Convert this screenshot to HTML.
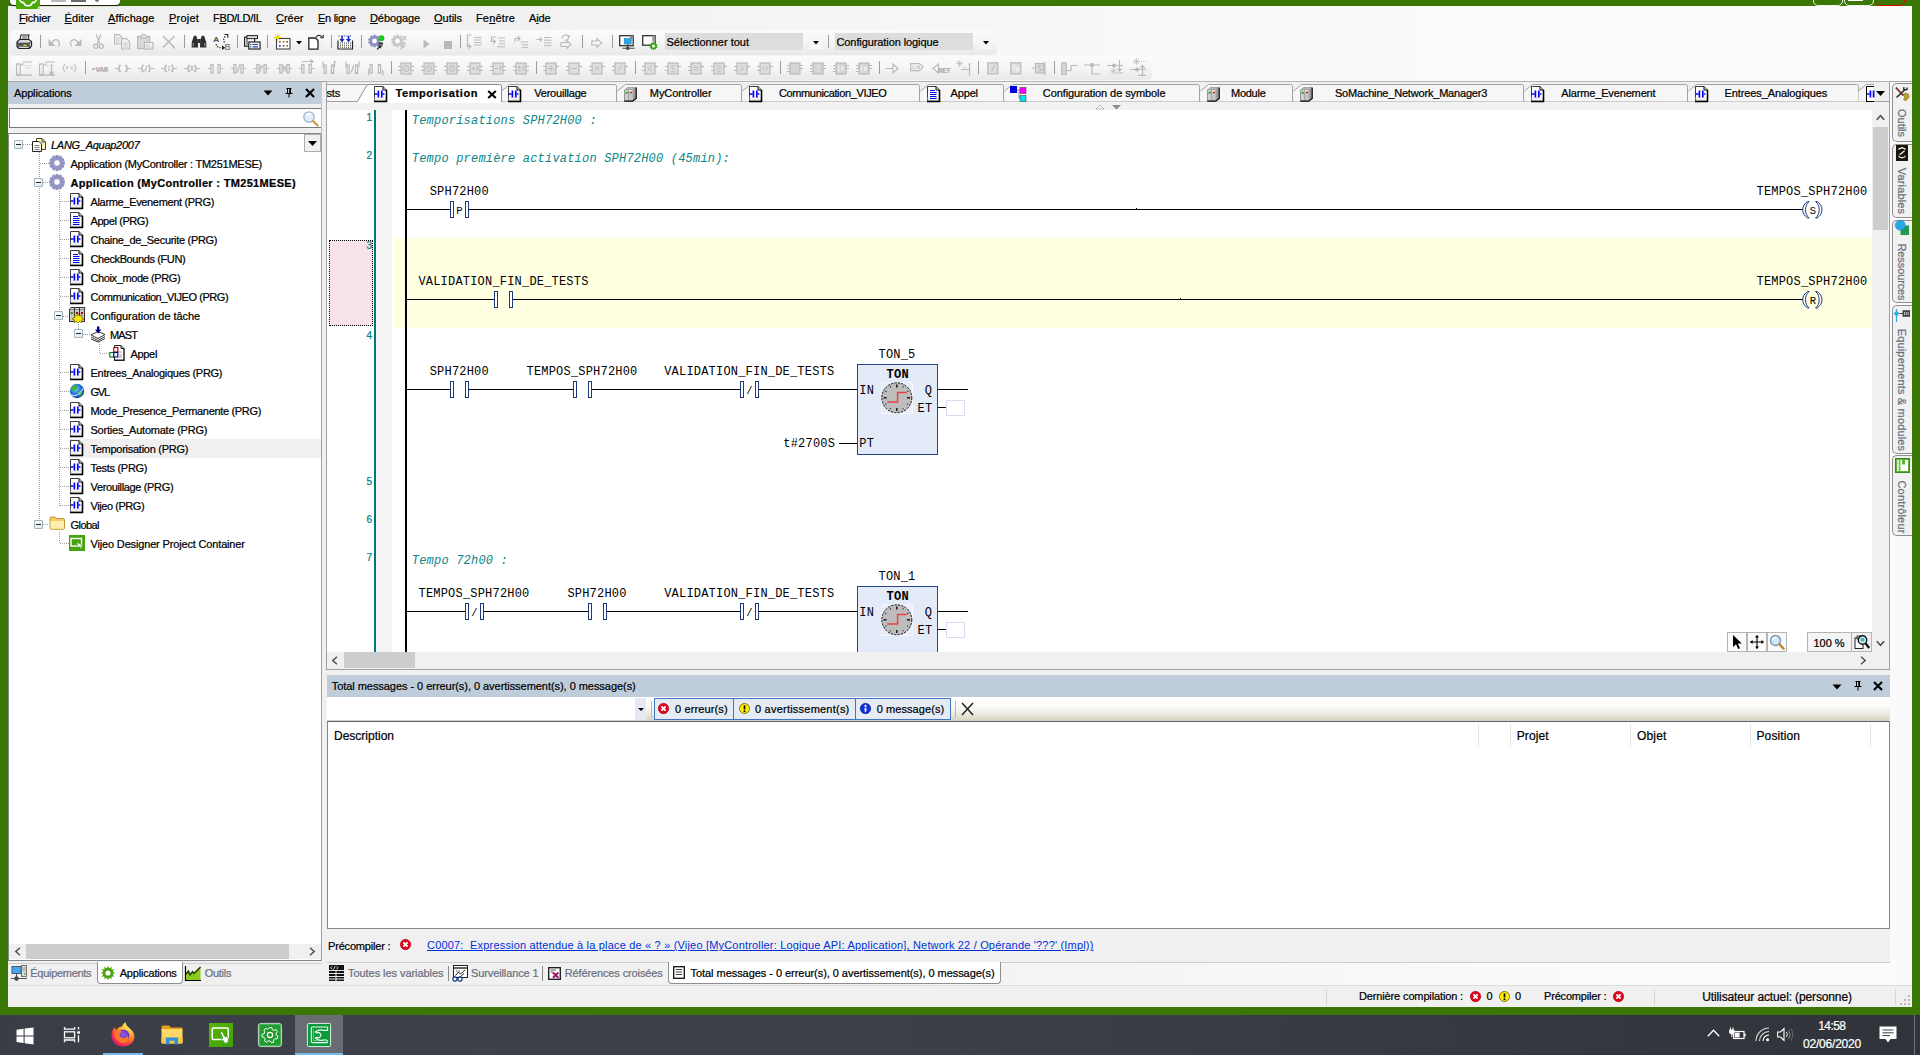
<!DOCTYPE html>
<html lang="fr"><head><meta charset="utf-8"><title>SoMachine Logic Builder</title><style>
html,body{margin:0;padding:0}
body{width:1920px;height:1055px;overflow:hidden;position:relative;background:#3b7704;font-family:'Liberation Sans',sans-serif;font-size:11px;color:#000}
body>div,body>svg,body>span{position:absolute;box-sizing:border-box}
body>span{white-space:pre;line-height:16px;-webkit-text-stroke:0.22px}
svg{overflow:visible}
u{text-decoration:underline;text-underline-offset:1px}
</style></head><body>
<div style="left:8px;top:6px;width:1904px;height:1000px;background:#f0f0f0"></div>
<div style="left:8px;top:6px;width:1904px;height:76px;background:linear-gradient(to right,#f0f0f0 0%,#f0f0f0 22%,#f7f7f7 50%,#fbfbfc 80%,#fbfbfc 100%)"></div>
<div style="left:10px;top:-6px;width:110px;height:11px;background:#fff;border-radius:0 0 4px 4px;box-shadow:0 1px 1px rgba(0,0,0,.75)"></div>
<div style="left:51px;top:0px;width:15px;height:2px;background:#b9b9b9"></div>
<div style="left:71px;top:0px;width:15px;height:2px;background:#6a6a6a"></div>
<div style="left:95px;top:0px;width:4px;height:2px;background:#777;border-radius:0 0 2px 2px"></div>
<div style="left:16px;top:0px;width:24px;height:9px;background:#4ca806;border-radius:0 0 1px 1px"></div>
<svg style="left:16px;top:0px;" width="24" height="9" viewBox="0 0 24 9"><path d="M3.5 0 Q5 3 7.5 2.5 L9 5 Q12 6.5 15 5 L16.5 2.5 Q19 3 20.5 0" fill="none" stroke="#fff" stroke-width="1.6"/><path d="M21 8.6 L23.6 8.6 L23.6 6 Z" fill="#fff"/></svg>
<div style="left:1813px;top:-6px;width:30px;height:12px;border:1px solid #fff;border-radius:0 0 5px 5px;opacity:.9"></div>
<div style="left:1844px;top:-6px;width:30px;height:12px;border:1px solid #fff;border-radius:0 0 5px 5px;opacity:.9"></div>
<div style="left:1875px;top:-6px;width:30px;height:12px;border:1px solid #e80000;border-radius:0 0 5px 5px"></div>
<div style="left:1848px;top:0px;width:15px;height:1px;background:#fff"></div>
<span style="left:19.0px;top:10px;letter-spacing:-0.219px;"><u>F</u>ichier</span>
<span style="left:64.5px;top:10px;letter-spacing:0.125px;"><u>É</u>diter</span>
<span style="left:108.0px;top:10px;letter-spacing:0.092px;"><u>A</u>ffichage</span>
<span style="left:169.0px;top:10px;letter-spacing:0.208px;"><u>P</u>rojet</span>
<span style="left:213.0px;top:10px;letter-spacing:-0.319px;">F<u>B</u>D/LD/IL</span>
<span style="left:276.0px;top:10px;letter-spacing:-0.003px;"><u>C</u>réer</span>
<span style="left:318.0px;top:10px;letter-spacing:-0.283px;"><u>E</u>n ligne</span>
<span style="left:370.0px;top:10px;letter-spacing:-0.098px;"><u>D</u>ébogage</span>
<span style="left:434.0px;top:10px;letter-spacing:-0.021px;"><u>O</u>utils</span>
<span style="left:476.0px;top:10px;letter-spacing:0.152px;">Fe<u>n</u>être</span>
<span style="left:529.0px;top:10px;letter-spacing:-0.137px;">A<u>i</u>de</span>
<div style="left:10px;top:30px;width:987px;height:25px;background:linear-gradient(#fbfbfb 0%,#f6f6f6 45%,#e9e9e9 100%);border-radius:4px"></div>
<div style="left:10px;top:56px;width:1142px;height:24px;background:linear-gradient(#fbfbfb 0%,#f6f6f6 45%,#e9e9e9 100%);border-radius:4px"></div>
<div style="left:8px;top:81px;width:1904px;height:1px;background:#a5a5a5"></div>
<div style="left:8px;top:82px;width:314px;height:22px;background:#bfcddb"></div>
<span style="left:14px;top:85px;letter-spacing:-0.152px;">Applications</span>
<svg style="left:263px;top:90px;" width="10" height="6" viewBox="0 0 10 6"><path d="M0.5 0.5 L9.5 0.5 L5 5.5 Z" fill="#000"/></svg>
<svg style="left:285px;top:88px;" width="8" height="10" viewBox="0 0 8 10"><path d="M1.5 0.5 H6.5 M2.5 0.5 V5 M5.5 0.5 V5 M4.8 0.5 V5 M0.5 5.5 H7.5 M4 5.5 V9.5" stroke="#000" stroke-width="1" fill="none"/></svg>
<svg style="left:305px;top:88px;" width="10" height="10" viewBox="0 0 10 10"><path d="M1 1 L9 9 M9 1 L1 9" stroke="#000" stroke-width="2.2"/></svg>
<div style="left:9px;top:108px;width:313px;height:20px;background:#fff;border:1px solid #7a7a7a"></div>
<svg style="left:302px;top:110px;" width="18" height="17" viewBox="0 0 18 17"><circle cx="7" cy="7" r="5.2" fill="#dfeefa" stroke="#9fb4c8" stroke-width="1.3"/><path d="M4 5.5 Q6 3 9 4.2" stroke="#fff" stroke-width="1.5" fill="none"/><path d="M11 11 L15.5 15.3" stroke="#c89d50" stroke-width="2.4" stroke-linecap="round"/></svg>
<div style="left:8px;top:133px;width:314px;height:828px;background:#fff;border:1px solid #828790;border-right-color:#a0a0a0"></div>
<div style="left:23px;top:144px;width:10px;height:1px;background:repeating-linear-gradient(to right,#a0a0a0 0 1px,transparent 1px 2px)"></div>
<div style="left:39px;top:152px;width:1px;height:372px;background:repeating-linear-gradient(to bottom,#a0a0a0 0 1px,transparent 1px 2px)"></div>
<div style="left:40px;top:163px;width:9px;height:1px;background:repeating-linear-gradient(to right,#a0a0a0 0 1px,transparent 1px 2px)"></div>
<div style="left:43px;top:182px;width:6px;height:1px;background:repeating-linear-gradient(to right,#a0a0a0 0 1px,transparent 1px 2px)"></div>
<div style="left:59px;top:191px;width:1px;height:315px;background:repeating-linear-gradient(to bottom,#a0a0a0 0 1px,transparent 1px 2px)"></div>
<div style="left:60px;top:201px;width:9px;height:1px;background:repeating-linear-gradient(to right,#a0a0a0 0 1px,transparent 1px 2px)"></div>
<div style="left:60px;top:220px;width:9px;height:1px;background:repeating-linear-gradient(to right,#a0a0a0 0 1px,transparent 1px 2px)"></div>
<div style="left:60px;top:239px;width:9px;height:1px;background:repeating-linear-gradient(to right,#a0a0a0 0 1px,transparent 1px 2px)"></div>
<div style="left:60px;top:258px;width:9px;height:1px;background:repeating-linear-gradient(to right,#a0a0a0 0 1px,transparent 1px 2px)"></div>
<div style="left:60px;top:277px;width:9px;height:1px;background:repeating-linear-gradient(to right,#a0a0a0 0 1px,transparent 1px 2px)"></div>
<div style="left:60px;top:296px;width:9px;height:1px;background:repeating-linear-gradient(to right,#a0a0a0 0 1px,transparent 1px 2px)"></div>
<div style="left:60px;top:372px;width:9px;height:1px;background:repeating-linear-gradient(to right,#a0a0a0 0 1px,transparent 1px 2px)"></div>
<div style="left:60px;top:391px;width:9px;height:1px;background:repeating-linear-gradient(to right,#a0a0a0 0 1px,transparent 1px 2px)"></div>
<div style="left:60px;top:410px;width:9px;height:1px;background:repeating-linear-gradient(to right,#a0a0a0 0 1px,transparent 1px 2px)"></div>
<div style="left:60px;top:429px;width:9px;height:1px;background:repeating-linear-gradient(to right,#a0a0a0 0 1px,transparent 1px 2px)"></div>
<div style="left:60px;top:448px;width:9px;height:1px;background:repeating-linear-gradient(to right,#a0a0a0 0 1px,transparent 1px 2px)"></div>
<div style="left:60px;top:467px;width:9px;height:1px;background:repeating-linear-gradient(to right,#a0a0a0 0 1px,transparent 1px 2px)"></div>
<div style="left:60px;top:486px;width:9px;height:1px;background:repeating-linear-gradient(to right,#a0a0a0 0 1px,transparent 1px 2px)"></div>
<div style="left:60px;top:505px;width:9px;height:1px;background:repeating-linear-gradient(to right,#a0a0a0 0 1px,transparent 1px 2px)"></div>
<div style="left:63px;top:316px;width:6px;height:1px;background:repeating-linear-gradient(to right,#a0a0a0 0 1px,transparent 1px 2px)"></div>
<div style="left:78px;top:324px;width:1px;height:6px;background:repeating-linear-gradient(to bottom,#a0a0a0 0 1px,transparent 1px 2px)"></div>
<div style="left:83px;top:334px;width:7px;height:1px;background:repeating-linear-gradient(to right,#a0a0a0 0 1px,transparent 1px 2px)"></div>
<div style="left:99px;top:342px;width:1px;height:11px;background:repeating-linear-gradient(to bottom,#a0a0a0 0 1px,transparent 1px 2px)"></div>
<div style="left:100px;top:353px;width:9px;height:1px;background:repeating-linear-gradient(to right,#a0a0a0 0 1px,transparent 1px 2px)"></div>
<div style="left:43px;top:524px;width:6px;height:1px;background:repeating-linear-gradient(to right,#a0a0a0 0 1px,transparent 1px 2px)"></div>
<div style="left:59px;top:532px;width:1px;height:11px;background:repeating-linear-gradient(to bottom,#a0a0a0 0 1px,transparent 1px 2px)"></div>
<div style="left:60px;top:543px;width:9px;height:1px;background:repeating-linear-gradient(to right,#a0a0a0 0 1px,transparent 1px 2px)"></div>
<div style="left:69px;top:439px;width:252px;height:19px;background:#f0f0f0"></div>
<div style="left:14px;top:140px;width:9px;height:9px;background:linear-gradient(135deg,#fff,#dfe6ea);border:1px solid #9cb4c0;border-radius:1px"></div>
<div style="left:16px;top:144px;width:5px;height:1px;background:#222"></div>
<svg style="left:31px;top:136px;" width="16" height="16" viewBox="0 0 16 16"><path d="M5.5 2.5 H11 L14.5 6 V13.5 H5.5 Z" fill="#fff8b0" stroke="#444" stroke-width="1"/><path d="M11 2.5 V6 H14.5" fill="none" stroke="#444"/><path d="M1.5 5.5 H8 L10.5 8 V15.5 H1.5 Z" fill="#fff" stroke="#222"/><path d="M3.5 9.5 H8.5 M3.5 11.5 H8.5 M3.5 13.5 H8.5" stroke="#666" stroke-width=".9"/></svg>
<span style="left:51px;top:137px;letter-spacing:-0.276px;font-style:italic;">LANG_Aquap2007</span>
<div style="left:304px;top:134px;width:17px;height:18px;background:#f0f0f0;border:1px solid #adadad"></div>
<svg style="left:308px;top:141px;" width="9" height="5" viewBox="0 0 9 5"><path d="M0 0 H9 L4.5 5 Z" fill="#000"/></svg>
<svg style="left:49px;top:155px;" width="16" height="16" viewBox="0 0 16 16"><g transform="translate(8,8)"><g fill="#9797c9"><rect x="-1.5" y="-8" width="3" height="3.2" transform="rotate(0)"/><rect x="-1.5" y="-8" width="3" height="3.2" transform="rotate(30)"/><rect x="-1.5" y="-8" width="3" height="3.2" transform="rotate(60)"/><rect x="-1.5" y="-8" width="3" height="3.2" transform="rotate(90)"/><rect x="-1.5" y="-8" width="3" height="3.2" transform="rotate(120)"/><rect x="-1.5" y="-8" width="3" height="3.2" transform="rotate(150)"/><rect x="-1.5" y="-8" width="3" height="3.2" transform="rotate(180)"/><rect x="-1.5" y="-8" width="3" height="3.2" transform="rotate(210)"/><rect x="-1.5" y="-8" width="3" height="3.2" transform="rotate(240)"/><rect x="-1.5" y="-8" width="3" height="3.2" transform="rotate(270)"/><rect x="-1.5" y="-8" width="3" height="3.2" transform="rotate(300)"/><rect x="-1.5" y="-8" width="3" height="3.2" transform="rotate(330)"/><circle r="6.2"/></g><circle r="6.2" fill="none" stroke="#7d7db4" stroke-width=".6"/><circle r="3.3" fill="#fff" stroke="#8484b8" stroke-width=".8"/></g></svg>
<span style="left:70.5px;top:156px;letter-spacing:-0.248px;">Application (MyController : TM251MESE)</span>
<div style="left:34px;top:178px;width:9px;height:9px;background:linear-gradient(135deg,#fff,#dfe6ea);border:1px solid #9cb4c0;border-radius:1px"></div>
<div style="left:36px;top:182px;width:5px;height:1px;background:#222"></div>
<svg style="left:49px;top:174px;" width="16" height="16" viewBox="0 0 16 16"><g transform="translate(8,8)"><g fill="#9797c9"><rect x="-1.5" y="-8" width="3" height="3.2" transform="rotate(0)"/><rect x="-1.5" y="-8" width="3" height="3.2" transform="rotate(30)"/><rect x="-1.5" y="-8" width="3" height="3.2" transform="rotate(60)"/><rect x="-1.5" y="-8" width="3" height="3.2" transform="rotate(90)"/><rect x="-1.5" y="-8" width="3" height="3.2" transform="rotate(120)"/><rect x="-1.5" y="-8" width="3" height="3.2" transform="rotate(150)"/><rect x="-1.5" y="-8" width="3" height="3.2" transform="rotate(180)"/><rect x="-1.5" y="-8" width="3" height="3.2" transform="rotate(210)"/><rect x="-1.5" y="-8" width="3" height="3.2" transform="rotate(240)"/><rect x="-1.5" y="-8" width="3" height="3.2" transform="rotate(270)"/><rect x="-1.5" y="-8" width="3" height="3.2" transform="rotate(300)"/><rect x="-1.5" y="-8" width="3" height="3.2" transform="rotate(330)"/><circle r="6.2"/></g><circle r="6.2" fill="none" stroke="#7d7db4" stroke-width=".6"/><circle r="3.3" fill="#fff" stroke="#8484b8" stroke-width=".8"/></g></svg>
<span style="left:70.5px;top:175px;letter-spacing:0.321px;font-weight:bold;">Application (MyController : TM251MESE)</span>
<svg style="left:70px;top:193px;" width="13" height="16" viewBox="0 0 13 16"><path d="M0.5 0.5 H9 L12.5 4 V15 H0.5 Z" fill="#fff" stroke="#3c3c3c" stroke-width="1"/><path d="M0.5 11 H12 V15 H0.5 Z" fill="#e4e4e4" opacity=".6"/><path d="M9 0.5 V4 H12.5" fill="none" stroke="#000" stroke-width="1"/><path d="M0 15.5 H13 M12.5 4 V16" stroke="#000" stroke-width="1.6" fill="none"/><path d="M0.8 8 H3.6 M8.6 8 H10.4" stroke="#0000ff" stroke-width="1.5"/><path d="M4.4 4.5 V11.5 M7.8 4.5 V11.5" stroke="#0000ff" stroke-width="1.7"/></svg>
<span style="left:90.5px;top:194px;letter-spacing:-0.333px;">Alarme_Evenement (PRG)</span>
<svg style="left:70px;top:212px;" width="13" height="16" viewBox="0 0 13 16"><path d="M0.5 0.5 H9 L12.5 4 V15 H0.5 Z" fill="#fff" stroke="#3c3c3c" stroke-width="1"/><path d="M0.5 11 H12 V15 H0.5 Z" fill="#e4e4e4" opacity=".6"/><path d="M9 0.5 V4 H12.5" fill="none" stroke="#000" stroke-width="1"/><path d="M0 15.5 H13 M12.5 4 V16" stroke="#000" stroke-width="1.6" fill="none"/><path d="M3 4.5 H8 M3 6.5 H9.5 M3 8.5 H9.5 M3 10.5 H9.5 M3 12.5 H9.5" stroke="#0000ff" stroke-width="1.1"/></svg>
<span style="left:90.5px;top:213px;letter-spacing:-0.424px;">Appel (PRG)</span>
<svg style="left:70px;top:231px;" width="13" height="16" viewBox="0 0 13 16"><path d="M0.5 0.5 H9 L12.5 4 V15 H0.5 Z" fill="#fff" stroke="#3c3c3c" stroke-width="1"/><path d="M0.5 11 H12 V15 H0.5 Z" fill="#e4e4e4" opacity=".6"/><path d="M9 0.5 V4 H12.5" fill="none" stroke="#000" stroke-width="1"/><path d="M0 15.5 H13 M12.5 4 V16" stroke="#000" stroke-width="1.6" fill="none"/><path d="M0.8 8 H3.6 M8.6 8 H10.4" stroke="#0000ff" stroke-width="1.5"/><path d="M4.4 4.5 V11.5 M7.8 4.5 V11.5" stroke="#0000ff" stroke-width="1.7"/></svg>
<span style="left:90.5px;top:232px;letter-spacing:-0.300px;">Chaine_de_Securite (PRG)</span>
<svg style="left:70px;top:250px;" width="13" height="16" viewBox="0 0 13 16"><path d="M0.5 0.5 H9 L12.5 4 V15 H0.5 Z" fill="#fff" stroke="#3c3c3c" stroke-width="1"/><path d="M0.5 11 H12 V15 H0.5 Z" fill="#e4e4e4" opacity=".6"/><path d="M9 0.5 V4 H12.5" fill="none" stroke="#000" stroke-width="1"/><path d="M0 15.5 H13 M12.5 4 V16" stroke="#000" stroke-width="1.6" fill="none"/><path d="M3 4.5 H8 M3 6.5 H9.5 M3 8.5 H9.5 M3 10.5 H9.5 M3 12.5 H9.5" stroke="#0000ff" stroke-width="1.1"/></svg>
<span style="left:90.5px;top:251px;letter-spacing:-0.399px;">CheckBounds (FUN)</span>
<svg style="left:70px;top:269px;" width="13" height="16" viewBox="0 0 13 16"><path d="M0.5 0.5 H9 L12.5 4 V15 H0.5 Z" fill="#fff" stroke="#3c3c3c" stroke-width="1"/><path d="M0.5 11 H12 V15 H0.5 Z" fill="#e4e4e4" opacity=".6"/><path d="M9 0.5 V4 H12.5" fill="none" stroke="#000" stroke-width="1"/><path d="M0 15.5 H13 M12.5 4 V16" stroke="#000" stroke-width="1.6" fill="none"/><path d="M0.8 8 H3.6 M8.6 8 H10.4" stroke="#0000ff" stroke-width="1.5"/><path d="M4.4 4.5 V11.5 M7.8 4.5 V11.5" stroke="#0000ff" stroke-width="1.7"/></svg>
<span style="left:90.5px;top:270px;letter-spacing:-0.393px;">Choix_mode (PRG)</span>
<svg style="left:70px;top:288px;" width="13" height="16" viewBox="0 0 13 16"><path d="M0.5 0.5 H9 L12.5 4 V15 H0.5 Z" fill="#fff" stroke="#3c3c3c" stroke-width="1"/><path d="M0.5 11 H12 V15 H0.5 Z" fill="#e4e4e4" opacity=".6"/><path d="M9 0.5 V4 H12.5" fill="none" stroke="#000" stroke-width="1"/><path d="M0 15.5 H13 M12.5 4 V16" stroke="#000" stroke-width="1.6" fill="none"/><path d="M0.8 8 H3.6 M8.6 8 H10.4" stroke="#0000ff" stroke-width="1.5"/><path d="M4.4 4.5 V11.5 M7.8 4.5 V11.5" stroke="#0000ff" stroke-width="1.7"/></svg>
<span style="left:90.5px;top:289px;letter-spacing:-0.434px;">Communication_VIJEO (PRG)</span>
<svg style="left:70px;top:364px;" width="13" height="16" viewBox="0 0 13 16"><path d="M0.5 0.5 H9 L12.5 4 V15 H0.5 Z" fill="#fff" stroke="#3c3c3c" stroke-width="1"/><path d="M0.5 11 H12 V15 H0.5 Z" fill="#e4e4e4" opacity=".6"/><path d="M9 0.5 V4 H12.5" fill="none" stroke="#000" stroke-width="1"/><path d="M0 15.5 H13 M12.5 4 V16" stroke="#000" stroke-width="1.6" fill="none"/><path d="M0.8 8 H3.6 M8.6 8 H10.4" stroke="#0000ff" stroke-width="1.5"/><path d="M4.4 4.5 V11.5 M7.8 4.5 V11.5" stroke="#0000ff" stroke-width="1.7"/></svg>
<span style="left:90.5px;top:365px;letter-spacing:-0.284px;">Entrees_Analogiques (PRG)</span>
<svg style="left:70px;top:402px;" width="13" height="16" viewBox="0 0 13 16"><path d="M0.5 0.5 H9 L12.5 4 V15 H0.5 Z" fill="#fff" stroke="#3c3c3c" stroke-width="1"/><path d="M0.5 11 H12 V15 H0.5 Z" fill="#e4e4e4" opacity=".6"/><path d="M9 0.5 V4 H12.5" fill="none" stroke="#000" stroke-width="1"/><path d="M0 15.5 H13 M12.5 4 V16" stroke="#000" stroke-width="1.6" fill="none"/><path d="M0.8 8 H3.6 M8.6 8 H10.4" stroke="#0000ff" stroke-width="1.5"/><path d="M4.4 4.5 V11.5 M7.8 4.5 V11.5" stroke="#0000ff" stroke-width="1.7"/></svg>
<span style="left:90.5px;top:403px;letter-spacing:-0.329px;">Mode_Presence_Permanente (PRG)</span>
<svg style="left:70px;top:421px;" width="13" height="16" viewBox="0 0 13 16"><path d="M0.5 0.5 H9 L12.5 4 V15 H0.5 Z" fill="#fff" stroke="#3c3c3c" stroke-width="1"/><path d="M0.5 11 H12 V15 H0.5 Z" fill="#e4e4e4" opacity=".6"/><path d="M9 0.5 V4 H12.5" fill="none" stroke="#000" stroke-width="1"/><path d="M0 15.5 H13 M12.5 4 V16" stroke="#000" stroke-width="1.6" fill="none"/><path d="M0.8 8 H3.6 M8.6 8 H10.4" stroke="#0000ff" stroke-width="1.5"/><path d="M4.4 4.5 V11.5 M7.8 4.5 V11.5" stroke="#0000ff" stroke-width="1.7"/></svg>
<span style="left:90.5px;top:422px;letter-spacing:-0.225px;">Sorties_Automate (PRG)</span>
<svg style="left:70px;top:440px;" width="13" height="16" viewBox="0 0 13 16"><path d="M0.5 0.5 H9 L12.5 4 V15 H0.5 Z" fill="#fff" stroke="#3c3c3c" stroke-width="1"/><path d="M0.5 11 H12 V15 H0.5 Z" fill="#e4e4e4" opacity=".6"/><path d="M9 0.5 V4 H12.5" fill="none" stroke="#000" stroke-width="1"/><path d="M0 15.5 H13 M12.5 4 V16" stroke="#000" stroke-width="1.6" fill="none"/><path d="M0.8 8 H3.6 M8.6 8 H10.4" stroke="#0000ff" stroke-width="1.5"/><path d="M4.4 4.5 V11.5 M7.8 4.5 V11.5" stroke="#0000ff" stroke-width="1.7"/></svg>
<span style="left:90.5px;top:441px;letter-spacing:-0.263px;">Temporisation (PRG)</span>
<svg style="left:70px;top:459px;" width="13" height="16" viewBox="0 0 13 16"><path d="M0.5 0.5 H9 L12.5 4 V15 H0.5 Z" fill="#fff" stroke="#3c3c3c" stroke-width="1"/><path d="M0.5 11 H12 V15 H0.5 Z" fill="#e4e4e4" opacity=".6"/><path d="M9 0.5 V4 H12.5" fill="none" stroke="#000" stroke-width="1"/><path d="M0 15.5 H13 M12.5 4 V16" stroke="#000" stroke-width="1.6" fill="none"/><path d="M0.8 8 H3.6 M8.6 8 H10.4" stroke="#0000ff" stroke-width="1.5"/><path d="M4.4 4.5 V11.5 M7.8 4.5 V11.5" stroke="#0000ff" stroke-width="1.7"/></svg>
<span style="left:90.5px;top:460px;letter-spacing:-0.291px;">Tests (PRG)</span>
<svg style="left:70px;top:478px;" width="13" height="16" viewBox="0 0 13 16"><path d="M0.5 0.5 H9 L12.5 4 V15 H0.5 Z" fill="#fff" stroke="#3c3c3c" stroke-width="1"/><path d="M0.5 11 H12 V15 H0.5 Z" fill="#e4e4e4" opacity=".6"/><path d="M9 0.5 V4 H12.5" fill="none" stroke="#000" stroke-width="1"/><path d="M0 15.5 H13 M12.5 4 V16" stroke="#000" stroke-width="1.6" fill="none"/><path d="M0.8 8 H3.6 M8.6 8 H10.4" stroke="#0000ff" stroke-width="1.5"/><path d="M4.4 4.5 V11.5 M7.8 4.5 V11.5" stroke="#0000ff" stroke-width="1.7"/></svg>
<span style="left:90.5px;top:479px;letter-spacing:-0.350px;">Verouillage (PRG)</span>
<svg style="left:70px;top:497px;" width="13" height="16" viewBox="0 0 13 16"><path d="M0.5 0.5 H9 L12.5 4 V15 H0.5 Z" fill="#fff" stroke="#3c3c3c" stroke-width="1"/><path d="M0.5 11 H12 V15 H0.5 Z" fill="#e4e4e4" opacity=".6"/><path d="M9 0.5 V4 H12.5" fill="none" stroke="#000" stroke-width="1"/><path d="M0 15.5 H13 M12.5 4 V16" stroke="#000" stroke-width="1.6" fill="none"/><path d="M0.8 8 H3.6 M8.6 8 H10.4" stroke="#0000ff" stroke-width="1.5"/><path d="M4.4 4.5 V11.5 M7.8 4.5 V11.5" stroke="#0000ff" stroke-width="1.7"/></svg>
<span style="left:90.5px;top:498px;letter-spacing:-0.435px;">Vijeo (PRG)</span>
<div style="left:54px;top:311px;width:9px;height:9px;background:linear-gradient(135deg,#fff,#dfe6ea);border:1px solid #9cb4c0;border-radius:1px"></div>
<div style="left:56px;top:315px;width:5px;height:1px;background:#222"></div>
<svg style="left:69px;top:307px;" width="16" height="16" viewBox="0 0 16 16"><rect x="0.5" y="2.5" width="15" height="12" fill="#c8c8c8" stroke="#333"/><path d="M5.5 1 V14.5 M10.5 1 V14.5 M0.5 2.5 L2 0.5 H16 L15.5 2.5" stroke="#333" fill="#ddd"/><rect x="1.8" y="5" width="2" height="2" fill="#00a000"/><rect x="7" y="5" width="2" height="2" fill="#c00000"/><rect x="12" y="5" width="2" height="2" fill="#c00000"/><path d="M9 6.5 L10.3 9 L13 8 L12.3 10.6 L15 11.8 L12.5 13 L13 15.6 L10.4 14.6 L9 16 L7.6 14.6 L5 15.6 L5.5 13 L3 11.8 L5.7 10.6 L5 8 L7.7 9 Z" fill="#ffe800" stroke="#5a5000" stroke-width=".6"/></svg>
<span style="left:90.5px;top:308px;letter-spacing:-0.045px;">Configuration de tâche</span>
<div style="left:74px;top:329px;width:9px;height:9px;background:linear-gradient(135deg,#fff,#dfe6ea);border:1px solid #9cb4c0;border-radius:1px"></div>
<div style="left:76px;top:333px;width:5px;height:1px;background:#222"></div>
<svg style="left:90px;top:326px;" width="16" height="16" viewBox="0 0 16 16"><path d="M1 9 L8 5.5 L15 8.5 L8 12.5 Z M1 11 L8 14.5 L15 10.5 M1 13 L8 16 L15 12.5" fill="#fff" stroke="#222" stroke-width=".9"/><path d="M7 0.5 H9.4 V3.6 H11.4 L8.2 7.4 L5 3.6 H7 Z" fill="#000090"/></svg>
<span style="left:110px;top:327px;letter-spacing:-0.891px;">MAST</span>
<svg style="left:109px;top:345px;" width="16" height="16" viewBox="0 0 16 16"><path d="M5.5 0.5 H12 L15 3.5 V15 H5.5 Z" fill="#fff" stroke="#222"/><path d="M12 0.5 V3.5 H15 M5 15.5 H15.5 M15 3.5 V16" fill="none" stroke="#222"/><path d="M8 7 H13 M10 10 H13 M10 12 H13" stroke="#888" stroke-width=".8"/><rect x="4.8" y="2.5" width="4" height="4.5" fill="#fff" stroke="#a00000" stroke-width="1.1"/><rect x="0.8" y="7.5" width="4" height="4.5" fill="#fff" stroke="#008000" stroke-width="1.1"/><rect x="4.8" y="7.5" width="4" height="4.5" fill="#fff" stroke="#000090" stroke-width="1.1"/></svg>
<span style="left:130.5px;top:346px;letter-spacing:-0.328px;">Appel</span>
<svg style="left:69px;top:383px;" width="16" height="16" viewBox="0 0 16 16"><defs><radialGradient id="gl" cx=".4" cy=".35" r=".7"><stop offset="0" stop-color="#7fd0ff"/><stop offset=".6" stop-color="#1767d6"/><stop offset="1" stop-color="#0a2f90"/></radialGradient></defs><circle cx="8" cy="8" r="7.2" fill="url(#gl)"/><path d="M4 3 Q7 1.5 9 3.5 Q8 6 6 7 Q5 9.5 3 8 Q2.2 5 4 3 Z M9.5 8 Q12 7 13.5 9 Q13 12 10.5 13.5 Q9 11 9.5 8 Z" fill="#3db53d"/><path d="M1 11 Q8 16.5 15.5 3.5" stroke="#bfe3ff" stroke-width="1.2" fill="none" opacity=".9"/></svg>
<span style="left:90.5px;top:384px;letter-spacing:-1.200px;">GVL</span>
<div style="left:34px;top:520px;width:9px;height:9px;background:linear-gradient(135deg,#fff,#dfe6ea);border:1px solid #9cb4c0;border-radius:1px"></div>
<div style="left:36px;top:524px;width:5px;height:1px;background:#222"></div>
<svg style="left:49px;top:516px;" width="17" height="14" viewBox="0 0 17 14"><path d="M1 2.5 Q1 1 2.5 1 H6 L7.5 2.5 H14 Q15.5 2.5 15.5 4 V12 Q15.5 13.3 14 13.3 H2.5 Q1 13.3 1 12 Z" fill="#f3cd62" stroke="#b98d2b" stroke-width=".9"/><path d="M1.5 5 H15 V12 Q15 12.8 14 12.8 H2.5 Q1.5 12.8 1.5 12 Z" fill="#fdeeb0"/></svg>
<span style="left:70.5px;top:517px;letter-spacing:-0.549px;">Global</span>
<svg style="left:69px;top:535px;" width="16" height="16" viewBox="0 0 16 16"><rect width="16" height="16" fill="#46a310"/><rect x="2" y="3.5" width="10.5" height="7.5" fill="none" stroke="#fff" stroke-width="1.4"/><path d="M8 7.5 L13.5 10 L11.5 10.8 L13 13.2 L12 13.8 L10.5 11.4 L9 12.8 Z" fill="#fff" stroke="#46a310" stroke-width=".5"/></svg>
<span style="left:90.5px;top:536px;letter-spacing:-0.159px;">Vijeo Designer Project Container</span>
<div style="left:9px;top:944px;width:312px;height:15px;background:#f0f0f0"></div>
<div style="left:26px;top:944px;width:263px;height:15px;background:#cdcdcd"></div>
<svg style="left:14px;top:947px;" width="8" height="9" viewBox="0 0 8 9"><path d="M6 0.8 L1.8 4.5 L6 8.2" fill="none" stroke="#505050" stroke-width="1.5"/></svg>
<svg style="left:308px;top:947px;" width="8" height="9" viewBox="0 0 8 9"><path d="M2 0.8 L6.2 4.5 L2 8.2" fill="none" stroke="#505050" stroke-width="1.5"/></svg>
<div style="left:8px;top:963px;width:314px;height:1px;background:#d0d0d0"></div>
<div style="left:97px;top:962px;width:86px;height:22px;background:#fff;border:1px solid #8e8e8e;border-top:none;border-radius:0 0 4px 4px"></div>
<div style="left:8px;top:985px;width:1904px;height:1px;background:#dcdcdc"></div>
<svg style="left:11px;top:965px;" width="17" height="17" viewBox="0 0 17 17"><rect x="1" y="1.5" width="9" height="7" fill="#3fa9f5" stroke="#4d5a66" stroke-width="1"/><rect x="10.5" y="0.5" width="5" height="11" fill="#d8d8d8" stroke="#666" stroke-width=".9"/><path d="M11.5 3 H14.5 M11.5 5 H14.5" stroke="#777" stroke-width=".7"/><rect x="13" y="8" width="1.4" height="1.4" fill="#5a5"/><path d="M5.5 8.5 V12 M0 13.5 H16" stroke="#555" stroke-width="1"/><circle cx="5.5" cy="13.5" r="2.2" fill="#444"/></svg>
<span style="left:30.3px;top:965px;color:#6a6f7e;letter-spacing:-0.293px;">Équipements</span>
<svg style="left:100px;top:965px;" width="16" height="16" viewBox="0 0 16 16"><g transform="translate(8,8)" fill="#4aa30c"><path d="M-1.3 -4 L0 -7.6 L1.3 -4 Z" transform="rotate(0)"/><path d="M-1.3 -4 L0 -7.6 L1.3 -4 Z" transform="rotate(30)"/><path d="M-1.3 -4 L0 -7.6 L1.3 -4 Z" transform="rotate(60)"/><path d="M-1.3 -4 L0 -7.6 L1.3 -4 Z" transform="rotate(90)"/><path d="M-1.3 -4 L0 -7.6 L1.3 -4 Z" transform="rotate(120)"/><path d="M-1.3 -4 L0 -7.6 L1.3 -4 Z" transform="rotate(150)"/><path d="M-1.3 -4 L0 -7.6 L1.3 -4 Z" transform="rotate(180)"/><path d="M-1.3 -4 L0 -7.6 L1.3 -4 Z" transform="rotate(210)"/><path d="M-1.3 -4 L0 -7.6 L1.3 -4 Z" transform="rotate(240)"/><path d="M-1.3 -4 L0 -7.6 L1.3 -4 Z" transform="rotate(270)"/><path d="M-1.3 -4 L0 -7.6 L1.3 -4 Z" transform="rotate(300)"/><path d="M-1.3 -4 L0 -7.6 L1.3 -4 Z" transform="rotate(330)"/><circle r="5.2"/></g><circle cx="8" cy="8" r="2.6" fill="#fff"/></svg>
<span style="left:119.7px;top:965px;letter-spacing:-0.194px;">Applications</span>
<svg style="left:185px;top:966px;" width="16" height="15" viewBox="0 0 16 15"><path d="M0.5 0 V14.5 H16" stroke="#000" stroke-width="1.2" fill="none"/><path d="M1 14 V8 L3.5 5 L5 9 L7.5 5.5 L9 7.5 L15.5 1 V14 Z" fill="#8cc919"/><path d="M1 8 L3.5 5 L5 9 L7.5 5.5 L9 7.5 L15.5 1" stroke="#1e2a00" stroke-width="1.3" fill="none"/></svg>
<span style="left:204.7px;top:965px;color:#6a6f7e;letter-spacing:-0.271px;">Outils</span>
<div style="left:322px;top:82px;width:5px;height:903px;background:#f0f0f0"></div>
<div style="left:327px;top:82px;width:1563px;height:28px;background:#f0f0f0"></div>
<div style="left:327px;top:81px;width:1563px;height:1px;background:#b4b4b4"></div>
<div style="left:327px;top:101px;width:1563px;height:1px;background:#a0a0a0"></div>
<div style="left:327px;top:102px;width:1563px;height:8px;background:#f2f2f2"></div>
<div style="left:327px;top:84px;width:40px;height:17px;background:#f6f6f6;border-top:1px solid #a3a3a3"></div>
<span style="left:326.5px;top:85px;letter-spacing:-0.188px;">sts</span>
<svg style="left:1688px;top:84px;" width="171" height="18" viewBox="0 0 171 18"><path d="M0.5 17.5 V7 L8.5 0.5 H168.5 Q170.5 0.5 170.5 2.5 V17.5" fill="#f6f6f6" stroke="none"/><path d="M0.5 7 L8.5 0.5 H168.5 Q170.5 0.5 170.5 2.5 V17.5" fill="none" stroke="#a3a3a3" stroke-width="1"/></svg>
<svg style="left:1695px;top:85.5px;" width="13" height="16" viewBox="0 0 13 16"><path d="M0.5 0.5 H9 L12.5 4 V15 H0.5 Z" fill="#fff" stroke="#3c3c3c" stroke-width="1"/><path d="M0.5 11 H12 V15 H0.5 Z" fill="#e4e4e4" opacity=".6"/><path d="M9 0.5 V4 H12.5" fill="none" stroke="#000" stroke-width="1"/><path d="M0 15.5 H13 M12.5 4 V16" stroke="#000" stroke-width="1.6" fill="none"/><path d="M0.8 8 H3.6 M8.6 8 H10.4" stroke="#0000ff" stroke-width="1.5"/><path d="M4.4 4.5 V11.5 M7.8 4.5 V11.5" stroke="#0000ff" stroke-width="1.7"/></svg>
<span style="left:1724.5px;top:85px;letter-spacing:-0.099px;">Entrees_Analogiques</span>
<svg style="left:1524px;top:84px;" width="164" height="18" viewBox="0 0 164 18"><path d="M0.5 17.5 V7 L8.5 0.5 H161.5 Q163.5 0.5 163.5 2.5 V17.5" fill="#f6f6f6" stroke="none"/><path d="M0.5 7 L8.5 0.5 H161.5 Q163.5 0.5 163.5 2.5 V17.5" fill="none" stroke="#a3a3a3" stroke-width="1"/></svg>
<svg style="left:1531px;top:85.5px;" width="13" height="16" viewBox="0 0 13 16"><path d="M0.5 0.5 H9 L12.5 4 V15 H0.5 Z" fill="#fff" stroke="#3c3c3c" stroke-width="1"/><path d="M0.5 11 H12 V15 H0.5 Z" fill="#e4e4e4" opacity=".6"/><path d="M9 0.5 V4 H12.5" fill="none" stroke="#000" stroke-width="1"/><path d="M0 15.5 H13 M12.5 4 V16" stroke="#000" stroke-width="1.6" fill="none"/><path d="M0.8 8 H3.6 M8.6 8 H10.4" stroke="#0000ff" stroke-width="1.5"/><path d="M4.4 4.5 V11.5 M7.8 4.5 V11.5" stroke="#0000ff" stroke-width="1.7"/></svg>
<span style="left:1561.2px;top:85px;letter-spacing:-0.144px;">Alarme_Evenement</span>
<svg style="left:1293px;top:84px;" width="231" height="18" viewBox="0 0 231 18"><path d="M0.5 17.5 V7 L8.5 0.5 H228.5 Q230.5 0.5 230.5 2.5 V17.5" fill="#f6f6f6" stroke="none"/><path d="M0.5 7 L8.5 0.5 H228.5 Q230.5 0.5 230.5 2.5 V17.5" fill="none" stroke="#a3a3a3" stroke-width="1"/></svg>
<svg style="left:1300px;top:87px;" width="13" height="15" viewBox="0 0 13 15"><path d="M0.5 3 L3.5 0.5 H12 L8.5 3 Z" fill="#b4b4b4" stroke="#8a8a8a" stroke-width=".6"/><rect x="0.5" y="3" width="4" height="11" fill="#cdcdcd"/><rect x="4.5" y="3" width="4" height="11" fill="#c3c3c3"/><path d="M4.5 3 V14" stroke="#9a9a9a" stroke-width=".8"/><path d="M8.5 3 L12 0.5 V11.3 L8.5 14 Z" fill="#9c9c9c"/><rect x="5.2" y="3.4" width="2.4" height="2" fill="#f4f4f4"/><rect x="1.6" y="4.8" width="2.2" height="2" fill="#10c010"/><rect x="5.8" y="4.8" width="2.2" height="1.3" fill="#c01010"/><path d="M0.5 3 V14" stroke="#8c8c8c" stroke-width=".9"/><path d="M0.3 14.2 H8.6 L12.2 11.4 V0.5" fill="none" stroke="#000" stroke-width="1.2"/></svg>
<span style="left:1334.9px;top:85px;letter-spacing:-0.187px;">SoMachine_Network_Manager3</span>
<svg style="left:1200px;top:84px;" width="93" height="18" viewBox="0 0 93 18"><path d="M0.5 17.5 V7 L8.5 0.5 H90.5 Q92.5 0.5 92.5 2.5 V17.5" fill="#f6f6f6" stroke="none"/><path d="M0.5 7 L8.5 0.5 H90.5 Q92.5 0.5 92.5 2.5 V17.5" fill="none" stroke="#a3a3a3" stroke-width="1"/></svg>
<svg style="left:1207px;top:87px;" width="13" height="15" viewBox="0 0 13 15"><path d="M0.5 3 L3.5 0.5 H12 L8.5 3 Z" fill="#b4b4b4" stroke="#8a8a8a" stroke-width=".6"/><rect x="0.5" y="3" width="4" height="11" fill="#cdcdcd"/><rect x="4.5" y="3" width="4" height="11" fill="#c3c3c3"/><path d="M4.5 3 V14" stroke="#9a9a9a" stroke-width=".8"/><path d="M8.5 3 L12 0.5 V11.3 L8.5 14 Z" fill="#9c9c9c"/><rect x="5.2" y="3.4" width="2.4" height="2" fill="#f4f4f4"/><rect x="1.6" y="4.8" width="2.2" height="2" fill="#10c010"/><rect x="5.8" y="4.8" width="2.2" height="1.3" fill="#c01010"/><path d="M0.5 3 V14" stroke="#8c8c8c" stroke-width=".9"/><path d="M0.3 14.2 H8.6 L12.2 11.4 V0.5" fill="none" stroke="#000" stroke-width="1.2"/></svg>
<span style="left:1231.0px;top:85px;letter-spacing:-0.263px;">Module</span>
<svg style="left:1004px;top:84px;" width="196" height="18" viewBox="0 0 196 18"><path d="M0.5 17.5 V7 L8.5 0.5 H193.5 Q195.5 0.5 195.5 2.5 V17.5" fill="#f6f6f6" stroke="none"/><path d="M0.5 7 L8.5 0.5 H193.5 Q195.5 0.5 195.5 2.5 V17.5" fill="none" stroke="#a3a3a3" stroke-width="1"/></svg>
<svg style="left:1010px;top:86px;" width="17" height="16" viewBox="0 0 17 16"><path d="M7 4 H11 M9 4 V12 H11" fill="none" stroke="#9a9a9a"/><rect x="0" y="0" width="7" height="7" fill="#0000e0"/><rect x="10" y="1.5" width="6" height="6" fill="#ff00ff" stroke="#333" stroke-width=".5"/><rect x="10" y="9.5" width="6" height="6" fill="#00e5ee" stroke="#333" stroke-width=".5"/></svg>
<span style="left:1042.8px;top:85px;letter-spacing:-0.085px;">Configuration de symbole</span>
<svg style="left:920px;top:84px;" width="84" height="18" viewBox="0 0 84 18"><path d="M0.5 17.5 V7 L8.5 0.5 H81.5 Q83.5 0.5 83.5 2.5 V17.5" fill="#f6f6f6" stroke="none"/><path d="M0.5 7 L8.5 0.5 H81.5 Q83.5 0.5 83.5 2.5 V17.5" fill="none" stroke="#a3a3a3" stroke-width="1"/></svg>
<svg style="left:927px;top:85.5px;" width="13" height="16" viewBox="0 0 13 16"><path d="M0.5 0.5 H9 L12.5 4 V15 H0.5 Z" fill="#fff" stroke="#3c3c3c" stroke-width="1"/><path d="M0.5 11 H12 V15 H0.5 Z" fill="#e4e4e4" opacity=".6"/><path d="M9 0.5 V4 H12.5" fill="none" stroke="#000" stroke-width="1"/><path d="M0 15.5 H13 M12.5 4 V16" stroke="#000" stroke-width="1.6" fill="none"/><path d="M3 4.5 H8 M3 6.5 H9.5 M3 8.5 H9.5 M3 10.5 H9.5 M3 12.5 H9.5" stroke="#0000ff" stroke-width="1.1"/></svg>
<span style="left:950.5px;top:85px;letter-spacing:-0.148px;">Appel</span>
<svg style="left:742px;top:84px;" width="178" height="18" viewBox="0 0 178 18"><path d="M0.5 17.5 V7 L8.5 0.5 H175.5 Q177.5 0.5 177.5 2.5 V17.5" fill="#f6f6f6" stroke="none"/><path d="M0.5 7 L8.5 0.5 H175.5 Q177.5 0.5 177.5 2.5 V17.5" fill="none" stroke="#a3a3a3" stroke-width="1"/></svg>
<svg style="left:749px;top:85.5px;" width="13" height="16" viewBox="0 0 13 16"><path d="M0.5 0.5 H9 L12.5 4 V15 H0.5 Z" fill="#fff" stroke="#3c3c3c" stroke-width="1"/><path d="M0.5 11 H12 V15 H0.5 Z" fill="#e4e4e4" opacity=".6"/><path d="M9 0.5 V4 H12.5" fill="none" stroke="#000" stroke-width="1"/><path d="M0 15.5 H13 M12.5 4 V16" stroke="#000" stroke-width="1.6" fill="none"/><path d="M0.8 8 H3.6 M8.6 8 H10.4" stroke="#0000ff" stroke-width="1.5"/><path d="M4.4 4.5 V11.5 M7.8 4.5 V11.5" stroke="#0000ff" stroke-width="1.7"/></svg>
<span style="left:778.9px;top:85px;letter-spacing:-0.354px;">Communication_VIJEO</span>
<svg style="left:617px;top:84px;" width="125" height="18" viewBox="0 0 125 18"><path d="M0.5 17.5 V7 L8.5 0.5 H122.5 Q124.5 0.5 124.5 2.5 V17.5" fill="#f6f6f6" stroke="none"/><path d="M0.5 7 L8.5 0.5 H122.5 Q124.5 0.5 124.5 2.5 V17.5" fill="none" stroke="#a3a3a3" stroke-width="1"/></svg>
<svg style="left:624px;top:87px;" width="13" height="15" viewBox="0 0 13 15"><path d="M0.5 3 L3.5 0.5 H12 L8.5 3 Z" fill="#b4b4b4" stroke="#8a8a8a" stroke-width=".6"/><rect x="0.5" y="3" width="4" height="11" fill="#cdcdcd"/><rect x="4.5" y="3" width="4" height="11" fill="#c3c3c3"/><path d="M4.5 3 V14" stroke="#9a9a9a" stroke-width=".8"/><path d="M8.5 3 L12 0.5 V11.3 L8.5 14 Z" fill="#9c9c9c"/><rect x="5.2" y="3.4" width="2.4" height="2" fill="#f4f4f4"/><rect x="1.6" y="4.8" width="2.2" height="2" fill="#10c010"/><rect x="5.8" y="4.8" width="2.2" height="1.3" fill="#c01010"/><path d="M0.5 3 V14" stroke="#8c8c8c" stroke-width=".9"/><path d="M0.3 14.2 H8.6 L12.2 11.4 V0.5" fill="none" stroke="#000" stroke-width="1.2"/></svg>
<span style="left:649.8px;top:85px;letter-spacing:-0.055px;">MyController</span>
<svg style="left:501px;top:84px;" width="116" height="18" viewBox="0 0 116 18"><path d="M0.5 17.5 V7 L8.5 0.5 H113.5 Q115.5 0.5 115.5 2.5 V17.5" fill="#f6f6f6" stroke="none"/><path d="M0.5 7 L8.5 0.5 H113.5 Q115.5 0.5 115.5 2.5 V17.5" fill="none" stroke="#a3a3a3" stroke-width="1"/></svg>
<svg style="left:508px;top:85.5px;" width="13" height="16" viewBox="0 0 13 16"><path d="M0.5 0.5 H9 L12.5 4 V15 H0.5 Z" fill="#fff" stroke="#3c3c3c" stroke-width="1"/><path d="M0.5 11 H12 V15 H0.5 Z" fill="#e4e4e4" opacity=".6"/><path d="M9 0.5 V4 H12.5" fill="none" stroke="#000" stroke-width="1"/><path d="M0 15.5 H13 M12.5 4 V16" stroke="#000" stroke-width="1.6" fill="none"/><path d="M0.8 8 H3.6 M8.6 8 H10.4" stroke="#0000ff" stroke-width="1.5"/><path d="M4.4 4.5 V11.5 M7.8 4.5 V11.5" stroke="#0000ff" stroke-width="1.7"/></svg>
<span style="left:534.2px;top:85px;letter-spacing:-0.194px;">Verouillage</span>
<svg style="left:1858px;top:84px;" width="16" height="18" viewBox="0 0 16 18"><path d="M0.5 17.5 V7 L8.5 0.5 H16 V17.5 Z" fill="#f6f6f6"/><path d="M0.5 7 L8.5 0.5 H16" fill="none" stroke="#a3a3a3"/></svg>
<svg style="left:1866px;top:85.5px;" width="8" height="16" viewBox="0 0 8 16"><path d="M0.5 0.5 H8 M0.5 0.5 V15 H8 M0 15.5 H8" fill="none" stroke="#000"/><rect x="1" y="1" width="7" height="14" fill="#fff"/><path d="M0.8 8 H3.6" stroke="#0000ff" stroke-width="1.5"/><path d="M4.4 4.5 V11.5 M7.6 4.5 V11.5" stroke="#0000ff" stroke-width="1.7"/></svg>
<svg style="left:1876px;top:91px;" width="9" height="5" viewBox="0 0 9 5"><path d="M0 0 H9 L4.5 5 Z" fill="#000"/></svg>
<svg style="left:357px;top:84px;" width="145" height="18" viewBox="0 0 145 18"><path d="M0 18 L10 1.2 Q10.6 0.5 12 0.5 H142.5 Q144.5 0.5 144.5 2.5 V18 Z" fill="#fff" stroke="#8c8c8c" stroke-width="1"/><path d="M0.5 18 H144" stroke="#fff" stroke-width="2"/></svg>
<svg style="left:374px;top:85.5px;" width="13" height="16" viewBox="0 0 13 16"><path d="M0.5 0.5 H9 L12.5 4 V15 H0.5 Z" fill="#fff" stroke="#3c3c3c" stroke-width="1"/><path d="M0.5 11 H12 V15 H0.5 Z" fill="#e4e4e4" opacity=".6"/><path d="M9 0.5 V4 H12.5" fill="none" stroke="#000" stroke-width="1"/><path d="M0 15.5 H13 M12.5 4 V16" stroke="#000" stroke-width="1.6" fill="none"/><path d="M0.8 8 H3.6 M8.6 8 H10.4" stroke="#0000ff" stroke-width="1.5"/><path d="M4.4 4.5 V11.5 M7.8 4.5 V11.5" stroke="#0000ff" stroke-width="1.7"/></svg>
<span style="left:395.5px;top:85px;letter-spacing:0.578px;font-weight:bold;">Temporisation</span>
<svg style="left:487px;top:90px;" width="10" height="9" viewBox="0 0 10 9"><path d="M1.2 1 L8.8 8 M8.8 1 L1.2 8" stroke="#000" stroke-width="2.1"/></svg>
<svg style="left:1095px;top:104px;" width="28" height="6" viewBox="0 0 28 6"><path d="M1 5 L5 1 L9 5 Z" fill="#f4f4f4" stroke="#b0b0b0" stroke-width=".8"/><path d="M17 1 H26 L21.5 5.5 Z" fill="#8a8a8a"/></svg>
<div style="left:326px;top:82px;width:1px;height:588px;background:#a0a0a0"></div>
<div style="left:321px;top:104px;width:1px;height:30px;background:#c0c0c0"></div>
<div style="left:327px;top:110px;width:1545px;height:542px;background:#fff"></div>
<div style="left:376px;top:110px;width:16px;height:542px;background:#f4f4f4"></div>
<div style="left:374px;top:110px;width:2px;height:542px;background:#007878"></div>
<div style="left:394px;top:238px;width:1478px;height:90px;background:#ffffe1"></div>
<div style="left:329px;top:240px;width:44px;height:86px;background:#f9e3ea;border:1px dotted #000"></div>
<div style="left:405px;top:110px;width:2px;height:542px;background:#000"></div>
<span style="right:1548px;top:110px;font-size:10px;color:#008080;">1</span>
<span style="right:1548px;top:148px;font-size:10px;color:#008080;">2</span>
<span style="right:1548px;top:238px;font-size:10px;color:#008080;">3</span>
<span style="right:1548px;top:328px;font-size:10px;color:#008080;">4</span>
<span style="right:1548px;top:474px;font-size:10px;color:#008080;">5</span>
<span style="right:1548px;top:512px;font-size:10px;color:#008080;">6</span>
<span style="right:1548px;top:550px;font-size:10px;color:#008080;">7</span>
<span style="left:411.8px;top:113px;font-family:'Liberation Mono',monospace;font-size:12px;color:#0c8686;letter-spacing:0.199px;font-style:italic;-webkit-text-stroke:0;">Temporisations SPH72H00 :</span>
<span style="left:411.8px;top:151px;font-family:'Liberation Mono',monospace;font-size:12px;color:#0c8686;letter-spacing:0.199px;font-style:italic;-webkit-text-stroke:0;">Tempo première activation SPH72H00 (45min):</span>
<span style="left:411.8px;top:553px;font-family:'Liberation Mono',monospace;font-size:12px;color:#0c8686;letter-spacing:0.198px;font-style:italic;-webkit-text-stroke:0;">Tempo 72h00 :</span>
<div style="left:407px;top:209px;width:1396px;height:1px;background:#000"></div>
<span style="left:429.7px;top:184px;font-family:'Liberation Mono',monospace;font-size:12px;letter-spacing:0.199px;-webkit-text-stroke:0;">SPH72H00</span>
<div style="left:454px;top:209px;width:11px;height:1px;background:#fff"></div>
<div style="left:450px;top:201px;width:4px;height:17px;background:#fff;border:1px solid #1f3a7a"></div>
<div style="left:465px;top:201px;width:4px;height:17px;background:#fff;border:1px solid #1f3a7a"></div>
<span style="left:456.3px;top:203px;font-family:'Liberation Mono',monospace;font-size:10.5px;-webkit-text-stroke:0;">P</span>
<span style="left:1756.5px;top:184px;font-family:'Liberation Mono',monospace;font-size:12px;letter-spacing:0.198px;-webkit-text-stroke:0;">TEMPOS_SPH72H00</span>
<svg style="left:1802px;top:200.5px;" width="21" height="18" viewBox="0 0 21 18"><path d="M5.6 0.5 C-0.9 4.5 -0.9 13 5.6 17 L7.1 17 C2.3 13 2.3 4.5 7.1 0.5 Z M15.1 0.5 C21.6 4.5 21.6 13 15.1 17 L13.6 17 C18.4 13 18.4 4.5 13.6 0.5 Z" fill="#fff" stroke="#1f3a7a" stroke-width="1"/></svg>
<span style="left:1809.8px;top:203px;font-family:'Liberation Mono',monospace;font-size:10.5px;-webkit-text-stroke:0;">S</span>
<div style="left:1136px;top:208px;width:1px;height:1px;background:#000"></div>
<div style="left:407px;top:299px;width:1396px;height:1px;background:#000"></div>
<span style="left:418.4px;top:274px;font-family:'Liberation Mono',monospace;font-size:12px;letter-spacing:0.198px;-webkit-text-stroke:0;">VALIDATION_FIN_DE_TESTS</span>
<div style="left:498px;top:299px;width:11px;height:1px;background:#ffffe1"></div>
<div style="left:494px;top:291px;width:4px;height:17px;background:#fff;border:1px solid #1f3a7a"></div>
<div style="left:509px;top:291px;width:4px;height:17px;background:#fff;border:1px solid #1f3a7a"></div>
<span style="left:1756.5px;top:274px;font-family:'Liberation Mono',monospace;font-size:12px;letter-spacing:0.198px;-webkit-text-stroke:0;">TEMPOS_SPH72H00</span>
<svg style="left:1802px;top:290.5px;" width="21" height="18" viewBox="0 0 21 18"><path d="M5.6 0.5 C-0.9 4.5 -0.9 13 5.6 17 L7.1 17 C2.3 13 2.3 4.5 7.1 0.5 Z M15.1 0.5 C21.6 4.5 21.6 13 15.1 17 L13.6 17 C18.4 13 18.4 4.5 13.6 0.5 Z" fill="#fff" stroke="#1f3a7a" stroke-width="1"/></svg>
<span style="left:1809.8px;top:293px;font-family:'Liberation Mono',monospace;font-size:10.5px;-webkit-text-stroke:0;">R</span>
<div style="left:1180px;top:298px;width:1px;height:1px;background:#000"></div>
<div style="left:407px;top:389px;width:450px;height:1px;background:#000"></div>
<span style="left:429.7px;top:364px;font-family:'Liberation Mono',monospace;font-size:12px;letter-spacing:0.199px;-webkit-text-stroke:0;">SPH72H00</span>
<div style="left:454px;top:389px;width:11px;height:1px;background:#fff"></div>
<div style="left:450px;top:381px;width:4px;height:17px;background:#fff;border:1px solid #1f3a7a"></div>
<div style="left:465px;top:381px;width:4px;height:17px;background:#fff;border:1px solid #1f3a7a"></div>
<span style="left:526.5px;top:364px;font-family:'Liberation Mono',monospace;font-size:12px;letter-spacing:0.198px;-webkit-text-stroke:0;">TEMPOS_SPH72H00</span>
<div style="left:577px;top:389px;width:11px;height:1px;background:#fff"></div>
<div style="left:573px;top:381px;width:4px;height:17px;background:#fff;border:1px solid #1f3a7a"></div>
<div style="left:588px;top:381px;width:4px;height:17px;background:#fff;border:1px solid #1f3a7a"></div>
<span style="left:664.1999999999999px;top:364px;font-family:'Liberation Mono',monospace;font-size:12px;letter-spacing:0.198px;-webkit-text-stroke:0;">VALIDATION_FIN_DE_TESTS</span>
<div style="left:744px;top:389px;width:11px;height:1px;background:#fff"></div>
<div style="left:740px;top:381px;width:4px;height:17px;background:#fff;border:1px solid #1f3a7a"></div>
<div style="left:755px;top:381px;width:4px;height:17px;background:#fff;border:1px solid #1f3a7a"></div>
<span style="left:746.3px;top:383px;font-family:'Liberation Mono',monospace;font-size:10.5px;-webkit-text-stroke:0;">/</span>
<div style="left:857px;top:364px;width:81px;height:91px;background:#e3eaf8;border:1px solid #27458c"></div>
<span style="left:878.5px;top:347px;font-family:'Liberation Mono',monospace;font-size:12px;letter-spacing:0.197px;-webkit-text-stroke:0;">TON_5</span>
<span style="left:886.6px;top:367px;font-family:'Liberation Mono',monospace;font-size:12px;letter-spacing:0.197px;font-weight:bold;-webkit-text-stroke:0;">TON</span>
<span style="left:859.3px;top:383px;font-family:'Liberation Mono',monospace;font-size:12px;letter-spacing:0.197px;-webkit-text-stroke:0;">IN</span>
<span style="left:924.8px;top:383px;font-family:'Liberation Mono',monospace;font-size:12px;-webkit-text-stroke:0;">Q</span>
<svg style="left:881px;top:382px;overflow:hidden;" width="32" height="32" viewBox="0 0 32 32"><rect x="0" y="0" width="31.5" height="31.5" fill="#e9eefa" stroke="#f6f8fd" stroke-width="1"/><g transform="translate(15.8,15.8)"><circle r="15" fill="#bdbdbd" stroke="#111" stroke-width="1" stroke-dasharray="2.2 1.2"/><path d="M0 -13.2 V-10.2" stroke="#222" stroke-width="1.6" transform="rotate(0)"/><path d="M0 -13.2 V-12" stroke="#222" stroke-width="1" transform="rotate(30)"/><path d="M0 -13.2 V-12" stroke="#222" stroke-width="1" transform="rotate(60)"/><path d="M0 -13.2 V-10.2" stroke="#222" stroke-width="1.6" transform="rotate(90)"/><path d="M0 -13.2 V-12" stroke="#222" stroke-width="1" transform="rotate(120)"/><path d="M0 -13.2 V-12" stroke="#222" stroke-width="1" transform="rotate(150)"/><path d="M0 -13.2 V-10.2" stroke="#222" stroke-width="1.6" transform="rotate(180)"/><path d="M0 -13.2 V-12" stroke="#222" stroke-width="1" transform="rotate(210)"/><path d="M0 -13.2 V-12" stroke="#222" stroke-width="1" transform="rotate(240)"/><path d="M0 -13.2 V-10.2" stroke="#222" stroke-width="1.6" transform="rotate(270)"/><path d="M0 -13.2 V-12" stroke="#222" stroke-width="1" transform="rotate(300)"/><path d="M0 -13.2 V-12" stroke="#222" stroke-width="1" transform="rotate(330)"/><path d="M-9.5 4.3 H0.8 V-5.2 H10" fill="none" stroke="#ee4040" stroke-width="1.5"/></g></svg>
<span style="left:917.5999999999999px;top:401px;font-family:'Liberation Mono',monospace;font-size:12px;letter-spacing:0.197px;-webkit-text-stroke:0;">ET</span>
<div style="left:938px;top:389px;width:30px;height:1px;background:#000"></div>
<div style="left:938px;top:407px;width:8px;height:1px;background:#000"></div>
<div style="left:946px;top:400px;width:19px;height:16px;background:#fff;border:1px solid #d9dbf3"></div>
<span style="left:859.3px;top:436px;font-family:'Liberation Mono',monospace;font-size:12px;letter-spacing:0.197px;-webkit-text-stroke:0;">PT</span>
<div style="left:839px;top:443px;width:18px;height:1px;background:#000"></div>
<span style="left:783.3px;top:436px;font-family:'Liberation Mono',monospace;font-size:12px;letter-spacing:0.197px;-webkit-text-stroke:0;">t#2700S</span>
<div style="left:407px;top:611px;width:450px;height:1px;background:#000"></div>
<span style="left:418.5px;top:586px;font-family:'Liberation Mono',monospace;font-size:12px;letter-spacing:0.198px;-webkit-text-stroke:0;">TEMPOS_SPH72H00</span>
<div style="left:469px;top:611px;width:11px;height:1px;background:#fff"></div>
<div style="left:465px;top:603px;width:4px;height:17px;background:#fff;border:1px solid #1f3a7a"></div>
<div style="left:480px;top:603px;width:4px;height:17px;background:#fff;border:1px solid #1f3a7a"></div>
<span style="left:471.3px;top:605px;font-family:'Liberation Mono',monospace;font-size:10.5px;-webkit-text-stroke:0;">/</span>
<span style="left:567.4px;top:586px;font-family:'Liberation Mono',monospace;font-size:12px;letter-spacing:0.199px;-webkit-text-stroke:0;">SPH72H00</span>
<div style="left:592px;top:611px;width:11px;height:1px;background:#fff"></div>
<div style="left:588px;top:603px;width:4px;height:17px;background:#fff;border:1px solid #1f3a7a"></div>
<div style="left:603px;top:603px;width:4px;height:17px;background:#fff;border:1px solid #1f3a7a"></div>
<span style="left:664.1999999999999px;top:586px;font-family:'Liberation Mono',monospace;font-size:12px;letter-spacing:0.198px;-webkit-text-stroke:0;">VALIDATION_FIN_DE_TESTS</span>
<div style="left:744px;top:611px;width:11px;height:1px;background:#fff"></div>
<div style="left:740px;top:603px;width:4px;height:17px;background:#fff;border:1px solid #1f3a7a"></div>
<div style="left:755px;top:603px;width:4px;height:17px;background:#fff;border:1px solid #1f3a7a"></div>
<span style="left:746.3px;top:605px;font-family:'Liberation Mono',monospace;font-size:10.5px;-webkit-text-stroke:0;">/</span>
<div style="left:857px;top:586px;width:81px;height:66px;background:#e3eaf8;border:1px solid #27458c;border-bottom:none"></div>
<span style="left:878.5px;top:569px;font-family:'Liberation Mono',monospace;font-size:12px;letter-spacing:0.197px;-webkit-text-stroke:0;">TON_1</span>
<span style="left:886.6px;top:589px;font-family:'Liberation Mono',monospace;font-size:12px;letter-spacing:0.197px;font-weight:bold;-webkit-text-stroke:0;">TON</span>
<span style="left:859.3px;top:605px;font-family:'Liberation Mono',monospace;font-size:12px;letter-spacing:0.197px;-webkit-text-stroke:0;">IN</span>
<span style="left:924.8px;top:605px;font-family:'Liberation Mono',monospace;font-size:12px;-webkit-text-stroke:0;">Q</span>
<svg style="left:881px;top:604px;overflow:hidden;" width="32" height="32" viewBox="0 0 32 32"><rect x="0" y="0" width="31.5" height="31.5" fill="#e9eefa" stroke="#f6f8fd" stroke-width="1"/><g transform="translate(15.8,15.8)"><circle r="15" fill="#bdbdbd" stroke="#111" stroke-width="1" stroke-dasharray="2.2 1.2"/><path d="M0 -13.2 V-10.2" stroke="#222" stroke-width="1.6" transform="rotate(0)"/><path d="M0 -13.2 V-12" stroke="#222" stroke-width="1" transform="rotate(30)"/><path d="M0 -13.2 V-12" stroke="#222" stroke-width="1" transform="rotate(60)"/><path d="M0 -13.2 V-10.2" stroke="#222" stroke-width="1.6" transform="rotate(90)"/><path d="M0 -13.2 V-12" stroke="#222" stroke-width="1" transform="rotate(120)"/><path d="M0 -13.2 V-12" stroke="#222" stroke-width="1" transform="rotate(150)"/><path d="M0 -13.2 V-10.2" stroke="#222" stroke-width="1.6" transform="rotate(180)"/><path d="M0 -13.2 V-12" stroke="#222" stroke-width="1" transform="rotate(210)"/><path d="M0 -13.2 V-12" stroke="#222" stroke-width="1" transform="rotate(240)"/><path d="M0 -13.2 V-10.2" stroke="#222" stroke-width="1.6" transform="rotate(270)"/><path d="M0 -13.2 V-12" stroke="#222" stroke-width="1" transform="rotate(300)"/><path d="M0 -13.2 V-12" stroke="#222" stroke-width="1" transform="rotate(330)"/><path d="M-9.5 4.3 H0.8 V-5.2 H10" fill="none" stroke="#ee4040" stroke-width="1.5"/></g></svg>
<span style="left:917.5999999999999px;top:623px;font-family:'Liberation Mono',monospace;font-size:12px;letter-spacing:0.197px;-webkit-text-stroke:0;">ET</span>
<div style="left:938px;top:611px;width:30px;height:1px;background:#000"></div>
<div style="left:938px;top:629px;width:8px;height:1px;background:#000"></div>
<div style="left:946px;top:622px;width:19px;height:16px;background:#fff;border:1px solid #d9dbf3"></div>
<div style="left:1872px;top:110px;width:17px;height:542px;background:#f0f0f0"></div>
<div style="left:1873px;top:127px;width:15px;height:103px;background:#cdcdcd"></div>
<svg style="left:1876px;top:114px;" width="9" height="7" viewBox="0 0 9 7"><path d="M0.8 5.8 L4.5 1.8 L8.2 5.8" fill="none" stroke="#505050" stroke-width="1.6"/></svg>
<svg style="left:1876px;top:640px;" width="9" height="7" viewBox="0 0 9 7"><path d="M0.8 1.2 L4.5 5.2 L8.2 1.2" fill="none" stroke="#505050" stroke-width="1.6"/></svg>
<div style="left:327px;top:652px;width:1562px;height:17px;background:#f0f0f0"></div>
<div style="left:344px;top:652px;width:71px;height:16px;background:#cdcdcd"></div>
<svg style="left:331px;top:656px;" width="8" height="9" viewBox="0 0 8 9"><path d="M6 0.8 L1.8 4.5 L6 8.2" fill="none" stroke="#505050" stroke-width="1.5"/></svg>
<svg style="left:1859px;top:656px;" width="8" height="9" viewBox="0 0 8 9"><path d="M2 0.8 L6.2 4.5 L2 8.2" fill="none" stroke="#505050" stroke-width="1.5"/></svg>
<div style="left:1889px;top:82px;width:1px;height:588px;background:#a0a0a0"></div>
<div style="left:326px;top:669px;width:1564px;height:1px;background:#a0a0a0"></div>
<div style="left:1727px;top:632px;width:20px;height:20px;background:#fafafa;border:1px solid #b5b5b5"></div>
<div style="left:1747px;top:632px;width:20px;height:20px;background:#fafafa;border:1px solid #b5b5b5"></div>
<div style="left:1767px;top:632px;width:20px;height:20px;background:#fafafa;border:1px solid #b5b5b5"></div>
<svg style="left:1732px;top:634px;" width="11" height="16" viewBox="0 0 11 16"><path d="M1 1 V13 L4 10.2 L6.2 15 L8 14.2 L5.8 9.6 H9.8 Z" fill="#000"/></svg>
<svg style="left:1750px;top:635px;" width="14" height="14" viewBox="0 0 14 14"><path d="M7 0.5 V13.5 M0.5 7 H13.5" stroke="#000" stroke-width="1.1"/><path d="M7 0 L5 2.6 H9 Z M7 14 L5 11.4 H9 Z M0 7 L2.6 5 V9 Z M14 7 L11.4 5 V9 Z" fill="#000"/></svg>
<svg style="left:1769px;top:634px;" width="16" height="16" viewBox="0 0 16 16"><circle cx="6.5" cy="6.5" r="5" fill="#cfe6fa" stroke="#7d97ad" stroke-width="1.4"/><path d="M3.8 5.5 Q5 3.2 7.5 3.6" stroke="#fff" stroke-width="1.4" fill="none"/><path d="M10.2 10.2 L14.6 14.6" stroke="#b98a3c" stroke-width="2.4" stroke-linecap="round"/></svg>
<div style="left:1807px;top:632px;width:45px;height:20px;background:#f4f4f4;border:1px solid #b5b5b5"></div>
<span style="left:1813.5px;top:635px;letter-spacing:-0.041px;">100 %</span>
<div style="left:1851px;top:632px;width:21px;height:20px;background:#f0f0f0;border:1px solid #b5b5b5"></div>
<svg style="left:1854px;top:634px;" width="16" height="16" viewBox="0 0 16 16"><rect x="1" y="4" width="8" height="10.5" fill="#fff" stroke="#222"/><rect x="3" y="2" width="4" height="3" fill="#ccc" stroke="#222" stroke-width=".8"/><circle cx="8.5" cy="6" r="4.2" fill="#d7f3f3" stroke="#111" stroke-width="1.4"/><rect x="6.6" y="4" width="3.8" height="3.4" fill="#39b7b7"/><path d="M11.5 9.3 L15.2 14" stroke="#111" stroke-width="2.2"/></svg>
<div style="left:327px;top:675px;width:1563px;height:22px;background:#bfcddb"></div>
<span style="left:331.7px;top:678px;letter-spacing:-0.046px;">Total messages - 0 erreur(s), 0 avertissement(s), 0 message(s)</span>
<svg style="left:1832px;top:684px;" width="10" height="6" viewBox="0 0 10 6"><path d="M0.5 0.5 L9.5 0.5 L5 5.5 Z" fill="#000"/></svg>
<svg style="left:1854px;top:681px;" width="8" height="10" viewBox="0 0 8 10"><path d="M1.5 0.5 H6.5 M2.5 0.5 V5 M5.5 0.5 V5 M4.8 0.5 V5 M0.5 5.5 H7.5 M4 5.5 V9.5" stroke="#000" stroke-width="1" fill="none"/></svg>
<svg style="left:1873px;top:681px;" width="10" height="10" viewBox="0 0 10 10"><path d="M1 1 L9 9 M9 1 L1 9" stroke="#000" stroke-width="2.2"/></svg>
<div style="left:327px;top:697px;width:1563px;height:24px;background:linear-gradient(#ffffff 0%,#fcfcf9 35%,#efeee4 65%,#dddbca 90%,#d2d0bd 100%);border-radius:0 0 3px 0"></div>
<div style="left:327px;top:697px;width:308px;height:23px;background:#fff"></div>
<div style="left:635px;top:698px;width:11px;height:22px;background:#e6e8f2"></div>
<svg style="left:637.5px;top:707.5px;" width="6" height="3" viewBox="0 0 6 3"><path d="M0 0 H6 L3 3 Z" fill="#000"/></svg>
<div style="left:651px;top:701px;width:1px;height:17px;background:#b9b9b9"></div>
<div style="left:654px;top:698px;width:80px;height:22px;background:#e4ebf5;border:1px solid #3f76c4"></div>
<svg style="left:658px;top:703px;" width="11" height="11" viewBox="0 0 11 11"><circle cx="5.5" cy="5.5" r="5.2" fill="#e3001b" stroke="#a80010" stroke-width=".6"/><path d="M3.4 3.4 L7.6 7.6 M7.6 3.4 L3.4 7.6" stroke="#fff" stroke-width="1.9"/></svg>
<span style="left:675px;top:701px;letter-spacing:0.132px;">0 erreur(s)</span>
<div style="left:733px;top:698px;width:123px;height:22px;background:#e4ebf5;border:1px solid #3f76c4"></div>
<svg style="left:738.5px;top:703px;" width="11" height="11" viewBox="0 0 11 11"><circle cx="5.5" cy="5.5" r="5" fill="#ffee00" stroke="#7a6a00" stroke-width=".9"/><path d="M5.5 2.4 V6.4" stroke="#000" stroke-width="1.7"/><circle cx="5.5" cy="8.2" r="1" fill="#000"/></svg>
<span style="left:755px;top:701px;letter-spacing:0.223px;">0 avertissement(s)</span>
<div style="left:855px;top:698px;width:96px;height:22px;background:#e4ebf5;border:1px solid #3f76c4"></div>
<svg style="left:860px;top:703px;" width="11" height="11" viewBox="0 0 11 11"><circle cx="5.5" cy="5.5" r="5.2" fill="#1030d8" stroke="#001a90" stroke-width=".6"/><path d="M5.5 4.8 V8.6" stroke="#fff" stroke-width="1.8"/><circle cx="5.5" cy="2.9" r="1.1" fill="#fff"/></svg>
<span style="left:876.7px;top:701px;letter-spacing:0.080px;">0 message(s)</span>
<div style="left:955px;top:701px;width:1px;height:17px;background:#b9b9b9"></div>
<svg style="left:961px;top:702px;" width="13" height="14" viewBox="0 0 13 14"><path d="M1 1 L12 13 M12 1 L1 13" stroke="#222" stroke-width="1.5"/></svg>
<div style="left:327px;top:721px;width:1563px;height:208px;background:#fff;border:1px solid #828790;border-top-color:#5d6480"></div>
<span style="left:334px;top:728px;font-size:12px;letter-spacing:-0.003px;">Description</span>
<span style="left:1516.7px;top:728px;font-size:12px;letter-spacing:0.107px;">Projet</span>
<span style="left:1637px;top:728px;font-size:12px;letter-spacing:0.163px;">Objet</span>
<span style="left:1756.5px;top:728px;font-size:12px;letter-spacing:0.100px;">Position</span>
<div style="left:1478px;top:724px;width:1px;height:23px;background:#e5e5e5"></div>
<div style="left:1510px;top:724px;width:1px;height:23px;background:#e5e5e5"></div>
<div style="left:1630px;top:724px;width:1px;height:23px;background:#e5e5e5"></div>
<div style="left:1750px;top:724px;width:1px;height:23px;background:#e5e5e5"></div>
<div style="left:1870px;top:724px;width:1px;height:23px;background:#e5e5e5"></div>
<span style="left:328px;top:938px;letter-spacing:-0.177px;">Précompiler :</span>
<svg style="left:400px;top:939px;" width="11" height="11" viewBox="0 0 11 11"><circle cx="5.5" cy="5.5" r="5.2" fill="#e3001b" stroke="#a80010" stroke-width=".6"/><path d="M3.4 3.4 L7.6 7.6 M7.6 3.4 L3.4 7.6" stroke="#fff" stroke-width="1.9"/></svg>
<span style="left:427px;top:937px;color:#0030d8;letter-spacing:0.183px;text-decoration:underline;-webkit-text-stroke:0;">C0007:  Expression attendue à la place de « ? » (Vijeo [MyController: Logique API: Application], Network 22 / Opérande '???' (Impl))</span>
<div style="left:327px;top:962px;width:1563px;height:23px;background:linear-gradient(to right,#f0f0f0 0%,#f3f3f3 40%,#fafafa 75%,#fbfbfb 100%);border-top:1px solid #cdcdcd"></div>
<svg style="left:329px;top:965px;" width="15" height="16" viewBox="0 0 15 16"><rect x="0" y="0" width="15" height="16" fill="#111"/><path d="M0 5.5 H15 M0 8.5 H15 M0 11.5 H15 M0 14 H15 M7 5.5 V16" stroke="#fff" stroke-width=".9"/><path d="M3.2 1.2 L1.8 2.8 L3.2 4.4 M7.5 1.2 L8.9 2.8 L7.5 4.4 M6.2 1 L4.6 4.6" stroke="#fff" stroke-width=".8" fill="none"/></svg>
<span style="left:348px;top:965px;color:#6a6f7e;letter-spacing:-0.055px;">Toutes les variables</span>
<div style="left:448px;top:966px;width:1px;height:15px;background:#8a8a8a"></div>
<svg style="left:452px;top:965px;" width="16" height="17" viewBox="0 0 16 17"><rect x="1.5" y="0.5" width="14" height="12" fill="#fff" stroke="#222"/><path d="M1.5 3 H15.5" stroke="#222" stroke-width="1.4"/><path d="M3.5 10.5 L6.5 7 L8.5 9 L13 5" stroke="#222" stroke-width="1" fill="none"/><path d="M4 6 H9" stroke="#222" stroke-width=".8" stroke-dasharray="1.5 1"/><circle cx="3" cy="14" r="2.1" fill="#fff" stroke="#0c2f7a" stroke-width="1.1"/><circle cx="8" cy="14" r="2.1" fill="#fff" stroke="#0c2f7a" stroke-width="1.1"/><path d="M5 13.6 H6 M8 12 L12 8.5" stroke="#0c2f7a" stroke-width="1"/></svg>
<span style="left:471px;top:965px;color:#6a6f7e;letter-spacing:-0.114px;">Surveillance 1</span>
<div style="left:542px;top:966px;width:1px;height:15px;background:#8a8a8a"></div>
<svg style="left:548px;top:967px;" width="13" height="13" viewBox="0 0 13 13"><rect x="0.7" y="0.7" width="11.6" height="11.6" fill="#fff" stroke="#222" stroke-width="1.4"/><path d="M2.5 3 H8 M2.5 5 H5" stroke="#444" stroke-width=".9"/><path d="M5 5.5 L10.3 10.8 M10.3 5.5 L5 10.8" stroke="#a0126e" stroke-width="2"/></svg>
<span style="left:564.7px;top:965px;color:#6a6f7e;letter-spacing:-0.120px;">Références croisées</span>
<div style="left:668px;top:962px;width:333px;height:22px;background:#fff;border:1px solid #8e8e8e;border-top:none;border-radius:0 0 4px 4px"></div>
<svg style="left:673px;top:966px;" width="12" height="13" viewBox="0 0 12 13"><rect x="0.7" y="0.7" width="10.6" height="11.6" fill="#fff" stroke="#111" stroke-width="1.3"/><path d="M2.8 3.5 H9.2 M2.8 6 H9.2 M2.8 8.5 H9.2" stroke="#333" stroke-width=".9"/></svg>
<span style="left:690.5px;top:965px;letter-spacing:-0.046px;">Total messages - 0 erreur(s), 0 avertissement(s), 0 message(s)</span>
<div style="left:8px;top:986px;width:1904px;height:21px;background:#f0f0f0"></div>
<span style="left:1359px;top:988px;letter-spacing:-0.136px;">Dernière compilation :</span>
<svg style="left:1470px;top:991px;" width="11" height="11" viewBox="0 0 11 11"><circle cx="5.5" cy="5.5" r="5.2" fill="#e3001b" stroke="#a80010" stroke-width=".6"/><path d="M3.4 3.4 L7.6 7.6 M7.6 3.4 L3.4 7.6" stroke="#fff" stroke-width="1.9"/></svg>
<span style="left:1486.5px;top:988px;">0</span>
<svg style="left:1499px;top:991px;" width="11" height="11" viewBox="0 0 11 11"><circle cx="5.5" cy="5.5" r="5" fill="#ffee00" stroke="#7a6a00" stroke-width=".9"/><path d="M5.5 2.4 V6.4" stroke="#000" stroke-width="1.7"/><circle cx="5.5" cy="8.2" r="1" fill="#000"/></svg>
<span style="left:1515px;top:988px;">0</span>
<span style="left:1544px;top:988px;letter-spacing:-0.177px;">Précompiler :</span>
<svg style="left:1613px;top:991px;" width="11" height="11" viewBox="0 0 11 11"><circle cx="5.5" cy="5.5" r="5.2" fill="#e3001b" stroke="#a80010" stroke-width=".6"/><path d="M3.4 3.4 L7.6 7.6 M7.6 3.4 L3.4 7.6" stroke="#fff" stroke-width="1.9"/></svg>
<div style="left:1654px;top:989px;width:1px;height:16px;background:#d5d5d5"></div>
<div style="left:1326px;top:989px;width:1px;height:16px;background:#d5d5d5"></div>
<span style="left:1702.3px;top:989px;font-size:12px;letter-spacing:-0.130px;">Utilisateur actuel: (personne)</span>
<div style="left:1895px;top:989px;width:1px;height:16px;background:#d5d5d5"></div>
<svg style="left:1900px;top:995px;" width="11" height="11" viewBox="0 0 11 11"><g fill="#b8b8b8"><rect x="8" y="0" width="2" height="2"/><rect x="4" y="4" width="2" height="2"/><rect x="8" y="4" width="2" height="2"/><rect x="0" y="8" width="2" height="2"/><rect x="4" y="8" width="2" height="2"/><rect x="8" y="8" width="2" height="2"/></g></svg>
<div style="left:0px;top:1015px;width:1920px;height:40px;background:linear-gradient(to right,#393d46 0%,#3d4149 25%,#3c3f46 50%,#36393f 75%,#303339 100%)"></div>
<svg style="left:15.5px;top:1026.5px;" width="18" height="18" viewBox="0 0 18 18"><path d="M0.5 2.8 L7.6 1.8 V8.4 H0.5 Z M8.6 1.6 L17.5 0.4 V8.4 H8.6 Z M0.5 9.4 H7.6 V16 L0.5 15 Z M8.6 9.4 H17.5 V17.4 L8.6 16.2 Z" fill="#fff"/></svg>
<svg style="left:63px;top:1026px;" width="18" height="17" viewBox="0 0 18 17"><g fill="none" stroke="#fff" stroke-width="1.3"><path d="M1.5 1 V3.2 H11.6 V1"/><rect x="1.5" y="5.8" width="10.1" height="6"/><path d="M1.5 16.2 V14 H11.6 V16.2"/><path d="M15.5 1 V3.5 M15.5 9.3 V16.2"/></g><rect x="14.2" y="5.3" width="2.8" height="2.4" fill="#fff"/></svg>
<svg style="left:111px;top:1022px;" width="24" height="25" viewBox="0 0 24 25"><defs><radialGradient id="ff1" cx=".75" cy=".15" r="1"><stop offset="0" stop-color="#fff36b"/><stop offset=".3" stop-color="#ffbd2e"/><stop offset=".6" stop-color="#ff6a2a"/><stop offset=".85" stop-color="#f0205e"/><stop offset="1" stop-color="#c41a86"/></radialGradient><radialGradient id="ff2" cx=".5" cy=".4" r=".6"><stop offset="0" stop-color="#8c5cf0"/><stop offset="1" stop-color="#5a2bb0"/></radialGradient></defs><path d="M12 24.5 C4.5 24.5 0.5 19 0.5 13.5 C0.5 9.5 2.5 6 4 5 C4 6.5 4.8 7.6 5.6 8 C7 5.5 9.5 4.5 11 4.6 C11.5 2.5 13.5 0.8 15 0.3 C14.6 2.5 16 4 18 5.8 C21 8.3 23.5 11 23.5 14.5 C23.5 20 19 24.5 12 24.5 Z" fill="url(#ff1)"/><circle cx="12.4" cy="13.6" r="6" fill="url(#ff2)"/><path d="M3.5 9.5 C6 8 9.5 8.2 11.5 10 C9.5 10.4 8.2 11.6 8.6 13.4 C9.4 16.4 14.5 17 17 13.4 C18.5 18 15 21.5 11 21 C6 20.4 2.5 15 3.5 9.5 Z" fill="#ff7a22" opacity=".96"/></svg>
<svg style="left:161px;top:1025px;" width="22" height="20" viewBox="0 0 22 20"><path d="M0.5 2 Q0.5 0.5 2 0.5 H8 L10 2.5 H20.5 Q21.5 2.5 21.5 3.5 V6 H0.5 Z" fill="#e3a21a"/><rect x="0.5" y="4" width="21" height="14.5" rx="1" fill="#ffd766"/><path d="M0.5 12 H21.5 V17.5 Q21.5 18.5 20.5 18.5 H1.5 Q0.5 18.5 0.5 17.5 Z" fill="#f7c948"/><path d="M5 19.5 V12.5 H17 V19.5 H13.5 V15.8 H8.5 V19.5 Z" fill="#2f8fe0"/></svg>
<svg style="left:209px;top:1023px;" width="24" height="24" viewBox="0 0 24 24"><defs><linearGradient id="vj" x1="0" y1="0" x2="1" y2="1"><stop offset="0" stop-color="#5ab405"/><stop offset=".5" stop-color="#4caa02"/><stop offset="1" stop-color="#3f9f10"/></linearGradient></defs><rect width="24" height="24" fill="url(#vj)"/><rect x="3.2" y="5" width="16" height="11.5" rx="1.2" fill="none" stroke="#fff" stroke-width="1.5"/><path d="M11.5 10 Q11 8.6 12.2 8.4 Q13.2 8.3 13.8 9.6 L15.6 13.2 Q18.5 13.5 19.3 15.2 Q20 17.2 18.6 20 L15.4 20.2 Q15 18 13 16.6 Q12.4 15.4 13.8 15.2 Z" fill="#fff" stroke="#3a9a1a" stroke-width=".8"/></svg>
<svg style="left:258px;top:1023px;" width="24" height="24" viewBox="0 0 24 24"><rect x="0.4" y="0.4" width="23.2" height="23.2" rx="2.6" fill="#1f9a2e" stroke="#dff3e1" stroke-width=".8"/><rect x="1.6" y="1.6" width="20.8" height="20.8" rx="1.8" fill="none" stroke="#7fd08a" stroke-width=".5"/><g transform="translate(12,12)" fill="none" stroke="#fff" stroke-width="1.15"><circle r="2.6"/><path d="M-1.6 -8.2 H1.6 L2.2 -5.9 L4.3 -4.9 L6.4 -6.2 L8.2 -3.6 L6.5 -1.8 L6.7 0.6 L8.7 1.8 L7.5 4.9 L5.1 4.6 L3.5 6.3 L3.9 8.6 L0.8 9.3 L-0.4 7.2 L-2.8 7 L-4.3 8.8 L-7 7.2 L-6.3 4.9 L-7.6 2.9 L-9.9 2.6 L-9.8 -0.6 L-7.5 -1.2 L-6.6 -3.4 L-7.8 -5.5 L-5.4 -7.6 L-3.5 -6.2 Z" transform="scale(.86) translate(.6,-.3)"/></g></svg>
<div style="left:295px;top:1015px;width:48px;height:40px;background:#696c72"></div>
<svg style="left:307px;top:1023px;" width="24" height="24" viewBox="0 0 24 24"><rect x="0.4" y="0.4" width="23.2" height="23.2" rx="1.4" fill="#0a9a3a" stroke="#f0f8f1" stroke-width=".9"/><g fill="none" stroke="#fff" stroke-width="1.1" opacity=".95"><path d="M20.6 4 H5.6 Q4.3 4 4.3 5.3 V18.3 Q4.3 19.6 5.6 19.6 H20.2 V17.2"/><path d="M20.6 4 V7.4 H17 Q12 5.8 8.2 9 L9.6 10 A2.6 2.6 0 1 1 9.6 14.2 L8.2 15.2 Q12 18.4 17 16.8 L20.2 17.2"/><path d="M6.4 6.2 V17.5 H18" stroke-width=".7" opacity=".6"/></g></svg>
<div style="left:103px;top:1053px;width:40px;height:2px;background:#76b9ed"></div>
<div style="left:295px;top:1053px;width:48px;height:2px;background:#76b9ed"></div>
<svg style="left:1707px;top:1029px;" width="13" height="8" viewBox="0 0 13 8"><path d="M0.8 7.2 L6.5 1.2 L12.2 7.2" fill="none" stroke="#fff" stroke-width="1.3"/></svg>
<svg style="left:1729px;top:1027px;" width="17" height="14" viewBox="0 0 17 14"><rect x="4.5" y="4.5" width="10.5" height="7" fill="none" stroke="#fff" stroke-width="1.2"/><rect x="15.2" y="6.5" width="1.4" height="3" fill="#fff"/><rect x="5.6" y="5.6" width="5" height="4.8" fill="#fff"/><path d="M1.5 0.5 V3 M4 0.5 V3 M0.5 3 H5 V5 Q5 7 2.8 7 Q0.5 7 0.5 5 Z M2.8 7 V10" stroke="#fff" stroke-width="1" fill="#fff"/></svg>
<svg style="left:1755px;top:1027px;" width="15" height="15" viewBox="0 0 15 15"><g fill="none" stroke="#fff"><path d="M1 14 A13 13 0 0 1 14 1" stroke-width="1.1" opacity=".85"/><path d="M4.5 14 A9.5 9.5 0 0 1 14 4.5" stroke-width="1.1" opacity=".85"/><path d="M8 14 A6 6 0 0 1 14 8" stroke-width="1.1"/></g><circle cx="12.6" cy="12.8" r="1.5" fill="#fff"/></svg>
<svg style="left:1777px;top:1027px;" width="17" height="15" viewBox="0 0 17 15"><path d="M0.6 5 H3.5 L7 1.5 V13.5 L3.5 10 H0.6 Z" fill="none" stroke="#fff" stroke-width="1.1"/><path d="M9.5 5 Q11 7.5 9.5 10" fill="none" stroke="#fff" stroke-width="1" opacity=".9"/><path d="M11.8 3.2 Q14.2 7.5 11.8 11.8" fill="none" stroke="#c8c8c8" stroke-width="1" opacity=".6"/><path d="M14 1.5 Q17.4 7.5 14 13.5" fill="none" stroke="#aaa" stroke-width="1" opacity=".45"/></svg>
<span style="left:1818.3px;top:1018px;font-size:12px;color:#fff;letter-spacing:-0.606px;">14:58</span>
<span style="left:1803px;top:1036px;font-size:12px;color:#fff;letter-spacing:-0.206px;">02/06/2020</span>
<svg style="left:1879px;top:1026px;" width="18" height="18" viewBox="0 0 18 18"><path d="M0.5 0.5 H17.5 V13 H11.5 L9 16.5 L6.5 13 H0.5 Z" fill="#fff"/><path d="M3.5 4 H14.5 M3.5 6.8 H14.5 M3.5 9.6 H11" stroke="#3a3e47" stroke-width="1"/></svg>
<div style="left:1914px;top:1015px;width:1px;height:40px;background:#6f737a"></div>
<div style="left:1890px;top:82px;width:22px;height:903px;background:#fafafa"></div>
<div style="left:1892px;top:83px;width:20px;height:59px;background:#f1f1f1;border:1px solid #8e8e8e;border-right:none;border-radius:5px 0 0 5px"></div>
<div style="left:1892px;top:144px;width:20px;height:73.5px;background:#f1f1f1;border:1px solid #8e8e8e;border-right:none;border-radius:5px 0 0 5px"></div>
<div style="left:1892px;top:219.5px;width:20px;height:83.5px;background:#f1f1f1;border:1px solid #8e8e8e;border-right:none;border-radius:5px 0 0 5px"></div>
<div style="left:1892px;top:304.5px;width:20px;height:149.0px;background:#f1f1f1;border:1px solid #8e8e8e;border-right:none;border-radius:5px 0 0 5px"></div>
<div style="left:1892px;top:455px;width:20px;height:81px;background:#f1f1f1;border:1px solid #8e8e8e;border-right:none;border-radius:5px 0 0 5px"></div>
<svg style="left:1895px;top:86px;" width="15" height="16" viewBox="0 0 15 16"><path d="M1 1.5 L8.5 9.5" stroke="#8a1c1c" stroke-width="1.3"/><path d="M0.6 2.2 L7.8 10" stroke="#555" stroke-width=".7"/><path d="M8 8.5 L10.5 7 L13.8 8.2 L14 11.5 L11 14.8 L8.6 13.8 L9.6 11.2 Z" fill="#b5a028" stroke="#6e6212" stroke-width=".5"/><path d="M10.5 3.2 L1.5 11.5" stroke="#333" stroke-width="1.6"/><path d="M8.8 1 V3.6 H12 V1.4" fill="none" stroke="#222" stroke-width="1.3"/></svg>
<div style="left:1896px;top:145px;width:12px;height:15.5px;background:#1a150b"></div>
<svg style="left:1896px;top:145px;" width="12" height="15.5" viewBox="0 0 12 15.5"><g fill="none" stroke="#fff" stroke-width="1.1"><path d="M2.8 4.8 Q2.8 3.4 4.2 3.4 Q5.8 3.4 6 2.2 Q6.2 3.4 7.8 3.4 Q9.2 3.4 9.2 4.8"/><path d="M8.6 5.8 L3.6 9.8"/><path d="M2.8 10.8 Q2.8 12.2 4.2 12.2 Q5.8 12.2 6 13.4 Q6.2 12.2 7.8 12.2 Q9.2 12.2 9.2 10.8"/></g></svg>
<svg style="left:1894px;top:220px;" width="17" height="17" viewBox="0 0 17 17"><rect x="6.5" y="5.5" width="8.5" height="9.5" fill="#1f9a4a"/><circle cx="6.3" cy="5.3" r="5" fill="#2aa9e6" stroke="#2a7fc0" stroke-width=".6"/></svg>
<svg style="left:1893px;top:309px;" width="18" height="13" viewBox="0 0 18 13"><path d="M3.5 0 V13" stroke="#2aa9e6" stroke-width="1.2"/><path d="M0.5 4.5 L3.5 1.8 L6.5 4.5 L3.5 7.2 Z" fill="#2aa9e6"/><path d="M6.5 4.5 H10" stroke="#444" stroke-width="1"/><rect x="9.5" y="1.2" width="7.5" height="6.6" fill="#444"/><path d="M11.5 3 V6 M13.3 3 V6 M15 3 V6" stroke="#ddd" stroke-width=".8"/></svg>
<svg style="left:1895px;top:458px;" width="15" height="15" viewBox="0 0 15 15"><rect x="0.5" y="0.5" width="14" height="14" fill="#5cb531" stroke="#3d8a1c"/><rect x="2" y="2" width="2.2" height="11" fill="#e9f7df"/><rect x="5.4" y="2" width="7.6" height="11" fill="#fff"/><rect x="7" y="2" width="3" height="4.5" fill="#5cb531"/><path d="M2.6 3.5 H3.6 M2.6 5.5 H3.6 M2.6 7.5 H3.6 M2.6 9.5 H3.6 M2.6 11.5 H3.6" stroke="#5cb531" stroke-width=".7"/></svg>
<span style="left:1902px;top:123px;width:0;height:0;overflow:visible;color:#6a6f7e"><span style="position:absolute;left:-100px;top:-8px;width:200px;text-align:center;line-height:16px;transform:rotate(90deg);letter-spacing:-0.021px">Outils</span></span>
<span style="left:1902px;top:190.5px;width:0;height:0;overflow:visible;color:#6a6f7e"><span style="position:absolute;left:-100px;top:-8px;width:200px;text-align:center;line-height:16px;transform:rotate(90deg);letter-spacing:0.161px">Variables</span></span>
<span style="left:1902px;top:271.5px;width:0;height:0;overflow:visible;color:#6a6f7e"><span style="position:absolute;left:-100px;top:-8px;width:200px;text-align:center;line-height:16px;transform:rotate(90deg);letter-spacing:-0.108px">Ressources</span></span>
<span style="left:1902px;top:389.5px;width:0;height:0;overflow:visible;color:#6a6f7e"><span style="position:absolute;left:-100px;top:-8px;width:200px;text-align:center;line-height:16px;transform:rotate(90deg);letter-spacing:0.156px">Equipements &amp; modules</span></span>
<span style="left:1902px;top:506.5px;width:0;height:0;overflow:visible;color:#6a6f7e"><span style="position:absolute;left:-100px;top:-8px;width:200px;text-align:center;line-height:16px;transform:rotate(90deg);letter-spacing:0.164px">Contrôleur</span></span>
<svg style="left:16px;top:34px;" width="17" height="16" viewBox="0 0 17 16"><path d="M5 1 H13 L12 5.5 H4 Z" fill="#fff" stroke="#222" stroke-width="1.1"/><path d="M6.3 2.8 H11.3 M5.8 4.2 H10.8" stroke="#444" stroke-width=".8"/><path d="M3.5 5.5 H13 L15.5 7.5 V12 L13.5 14.5 H2.8 L1 12.5 V8 Z" fill="#d8d8d8" stroke="#222" stroke-width="1.2"/><path d="M1 9.3 H13.2 L15.5 7.6 M1.2 12 H13.2 M13.2 9.3 V14.3" stroke="#222" stroke-width="1.1" fill="none"/><rect x="2" y="10" width="10.5" height="1.6" fill="#555"/><rect x="7.5" y="10.6" width="3" height="1.2" fill="#f2e200"/><path d="M13.8 8.6 L14.8 7.9 M13.8 10.2 L14.8 9.5 M13.8 11.8 L14.8 11.1" stroke="#fff" stroke-width=".8"/></svg>
<div style="left:39.5px;top:35px;width:1px;height:13px;background:#9b9b9b"></div>
<svg style="left:47px;top:37px;" width="14" height="11" viewBox="0 0 14 11"><g fill="none" stroke="#b9b9b9" stroke-width="1.2"><path d="M1.5 2 V9 H8.5 Z" fill="#b9b9b9" stroke="none"/><path d="M5 6 Q7 1.5 10.5 3 Q13.8 5 11.5 9.5" /></g></svg>
<svg style="left:69px;top:37px;" width="14" height="11" viewBox="0 0 14 11"><g fill="none" stroke="#b9b9b9" stroke-width="1.2"><path d="M12.5 2 V9 H5.5 Z" fill="#b9b9b9" stroke="none"/><path d="M9 6 Q7 1.5 3.5 3 Q0.2 5 2.5 9.5" /></g></svg>
<svg style="left:93px;top:34px;" width="11" height="16" viewBox="0 0 11 16"><g fill="none" stroke="#b9b9b9" stroke-width="1.2"><path d="M3.2 0.5 L6.8 10 M7.8 0.5 L4.2 10"/><circle cx="2.8" cy="12.3" r="2.1"/><circle cx="8.2" cy="12.3" r="2.1"/></g></svg>
<svg style="left:114px;top:34px;" width="17" height="16" viewBox="0 0 17 16"><g fill="none" stroke="#b9b9b9" stroke-width="1.2"><path d="M0.6 0.6 H5 L7.5 3 V10 H0.6 Z" fill="#f4f4f4"/><path d="M2 4 H5.5 M2 6 H5.5 M2 8 H5.5" stroke-width=".8"/><path d="M7.6 4.6 H12.5 L15.5 7.5 V15 H7.6 Z" fill="#f4f4f4"/><path d="M9.2 9 H13.8 M9.2 11 H13.8 M9.2 13 H13.8" stroke-width=".8"/></g></svg>
<svg style="left:137px;top:34px;" width="17" height="16" viewBox="0 0 17 16"><g fill="none" stroke="#b9b9b9" stroke-width="1.2"><rect x="0.6" y="2.5" width="12" height="12" fill="#d9d9d9"/><path d="M4 2.5 Q4 0.6 6.6 0.6 Q9.2 0.6 9.2 2.5 V3.8 H4 Z" fill="#f0f0f0"/><rect x="7.5" y="8.5" width="8.5" height="6.5" fill="#f7f7f7"/><path d="M9 11 H13 M9 13 H14.5" stroke-width=".8"/></g></svg>
<svg style="left:162px;top:35px;" width="14" height="14" viewBox="0 0 14 14"><g fill="none" stroke="#b9b9b9" stroke-width="1.2"><path d="M1 1 L12.5 12.5 M12.5 1 L1 12.5" stroke-width="1.5"/><path d="M9 10.5 L13.3 14" stroke-width=".7"/></g></svg>
<div style="left:184px;top:35px;width:1px;height:13px;background:#9b9b9b"></div>
<svg style="left:191px;top:35px;" width="16" height="13" viewBox="0 0 16 13"><path d="M2.5 2 Q2.5 0.5 4 0.5 Q5.6 0.5 5.6 2 L6.8 5 L7 12.5 H0.6 L0.8 7 Z M13.5 2 Q13.5 0.5 12 0.5 Q10.4 0.5 10.4 2 L9.2 5 L9 12.5 H15.4 L15.2 7 Z" fill="#2f2f2f"/><rect x="6.5" y="4" width="3" height="4" fill="#2f2f2f"/><path d="M2.2 8 V11.2 M13.8 8 V11.2" stroke="#aaa" stroke-width=".9"/></svg>
<svg style="left:213px;top:34px;" width="18" height="16" viewBox="0 0 18 16"><path d="M3.2 10 Q3.5 14 9.5 13.8" fill="none" stroke="#222" stroke-width="1.2" stroke-dasharray="1.3 1.3"/><path d="M9 11.3 L12.2 13.8 L9 16 Z" fill="#222"/><path d="M11.5 8.5 Q9.5 4.5 12.8 1.8" fill="none" stroke="#222" stroke-width="1.2" stroke-dasharray="1.3 1.3"/><path d="M11.5 0.5 H14.8 V3.8" fill="none" stroke="#222" stroke-width="1.1"/></svg>
<span style="left:213.5px;top:32px;font-size:8px;color:#333;">A</span>
<span style="left:224.5px;top:39px;font-size:9px;color:#777;">B</span>
<div style="left:237px;top:35px;width:1px;height:13px;background:#9b9b9b"></div>
<svg style="left:244px;top:35px;" width="17" height="15" viewBox="0 0 17 15"><rect x="0.6" y="2.2" width="10" height="9" fill="#fafafa" stroke="#222" stroke-width="1.2"/><rect x="3" y="0.6" width="10.5" height="3" fill="#ddd" stroke="#222"/><path d="M2 5 H4 M2 7 H4 M2 9 H4" stroke="#222" stroke-width=".9"/><rect x="4.8" y="7" width="11.2" height="7" fill="#fff" stroke="#222" stroke-width="1.2"/><path d="M8.5 9.5 H14 M8.5 11.8 H14" stroke="#1a3fc0" stroke-width="1.2"/><path d="M6.2 9.5 H7.4 M6.2 11.8 H7.4" stroke="#222" stroke-width="1"/></svg>
<div style="left:267px;top:35px;width:1px;height:13px;background:#9b9b9b"></div>
<svg style="left:273px;top:33px;" width="18" height="17" viewBox="0 0 18 17"><rect x="3.5" y="5.5" width="13.5" height="10.5" fill="#fff" stroke="#444" stroke-width="1.1"/><g><rect x="6" y="8" width="1.6" height="1.6" fill="#d22"/><rect x="9.8" y="8" width="1.6" height="1.6" fill="#2a2"/><rect x="13.4" y="8" width="1.6" height="1.6" fill="#d22"/><rect x="6" y="12" width="1.6" height="1.6" fill="#22d"/><rect x="9.8" y="12" width="1.6" height="1.6" fill="#d22"/><rect x="13.4" y="12" width="1.6" height="1.6" fill="#2a2"/></g><path d="M4.5 0.5 V8.5 M0.5 4.5 H8.5 M1.6 1.6 L7.4 7.4 M7.4 1.6 L1.6 7.4" stroke="#e8d800" stroke-width="1"/></svg>
<svg style="left:296px;top:41px;" width="6" height="4" viewBox="0 0 6 4"><path d="M0 0 H6 L3 3.6 Z" fill="#000"/></svg>
<svg style="left:308px;top:34px;" width="17" height="16" viewBox="0 0 17 16"><path d="M0.8 4 H7.5 L10 6.5 V15.2 H0.8 Z" fill="#fff" stroke="#222" stroke-width="1.3"/><path d="M8 3.2 Q11 -0.5 14 3" fill="none" stroke="#222" stroke-width="1.1"/><path d="M12.2 3.8 H15.2 V0.8" fill="none" stroke="#222" stroke-width="1.1"/><rect x="11" y="7" width="5" height="8" fill="#f1f1f1"/></svg>
<div style="left:331px;top:35px;width:1px;height:13px;background:#9b9b9b"></div>
<svg style="left:337px;top:35px;" width="17" height="15" viewBox="0 0 17 15"><path d="M1 5.5 V14 H15.5 V5.5" fill="#fff" stroke="#222" stroke-width="1.2"/><path d="M3 8 H14 M3 10.2 H14 M3 12.2 H14" stroke="#333" stroke-width="1" stroke-dasharray="1 1"/><path d="M5 0.5 V5 M11.5 0.5 V5" stroke="#1a2fb0" stroke-width="1.6"/><path d="M2.4 4 H7.6 L5 7.6 Z M8.9 4 H14.1 L11.5 7.6 Z" fill="#1a2fb0"/><path d="M1.5 1 H3.5 M6.8 1 H9.6 M13 1 H15" stroke="#1a2fb0" stroke-width="1" stroke-dasharray="1 1"/></svg>
<div style="left:361px;top:35px;width:1px;height:13px;background:#9b9b9b"></div>
<svg style="left:368px;top:34px;" width="17" height="17" viewBox="0 0 17 17"><g transform="translate(6.5,7)"><g fill="#8d8fc8"><rect x="-1.2" y="-6.3" width="2.4" height="2.6" transform="rotate(0)"/><rect x="-1.2" y="-6.3" width="2.4" height="2.6" transform="rotate(36)"/><rect x="-1.2" y="-6.3" width="2.4" height="2.6" transform="rotate(72)"/><rect x="-1.2" y="-6.3" width="2.4" height="2.6" transform="rotate(108)"/><rect x="-1.2" y="-6.3" width="2.4" height="2.6" transform="rotate(144)"/><rect x="-1.2" y="-6.3" width="2.4" height="2.6" transform="rotate(180)"/><rect x="-1.2" y="-6.3" width="2.4" height="2.6" transform="rotate(216)"/><rect x="-1.2" y="-6.3" width="2.4" height="2.6" transform="rotate(252)"/><rect x="-1.2" y="-6.3" width="2.4" height="2.6" transform="rotate(288)"/><rect x="-1.2" y="-6.3" width="2.4" height="2.6" transform="rotate(324)"/><circle r="5"/></g><circle r="2.4" fill="#fff"/></g><circle cx="13.5" cy="4.2" r="2.6" fill="#0fd40f" stroke="#0a9a0a" stroke-width=".5"/><rect x="10.5" y="8.5" width="4.5" height="2.2" fill="#333"/><rect x="10.5" y="11.2" width="4" height="1.6" fill="#333" opacity=".8"/><path d="M9 15.5 L12.5 12 M12.5 12 V14.2 M12.5 12 H10.3" stroke="#333" stroke-width="1.1" fill="none"/></svg>
<svg style="left:391px;top:34px;" width="17" height="17" viewBox="0 0 17 17"><g transform="translate(6.5,7)"><g fill="#c9c9c9"><rect x="-1.2" y="-6.3" width="2.4" height="2.6" transform="rotate(0)"/><rect x="-1.2" y="-6.3" width="2.4" height="2.6" transform="rotate(36)"/><rect x="-1.2" y="-6.3" width="2.4" height="2.6" transform="rotate(72)"/><rect x="-1.2" y="-6.3" width="2.4" height="2.6" transform="rotate(108)"/><rect x="-1.2" y="-6.3" width="2.4" height="2.6" transform="rotate(144)"/><rect x="-1.2" y="-6.3" width="2.4" height="2.6" transform="rotate(180)"/><rect x="-1.2" y="-6.3" width="2.4" height="2.6" transform="rotate(216)"/><rect x="-1.2" y="-6.3" width="2.4" height="2.6" transform="rotate(252)"/><rect x="-1.2" y="-6.3" width="2.4" height="2.6" transform="rotate(288)"/><rect x="-1.2" y="-6.3" width="2.4" height="2.6" transform="rotate(324)"/><circle r="5"/></g><circle r="2.4" fill="#fff"/></g><path d="M11.5 2 L15.5 6 M15.5 2 L11.5 6" stroke="#c4c4c4" stroke-width="1.2"/><rect x="10.5" y="8.5" width="4.5" height="2.2" fill="#c6c6c6"/><rect x="10.5" y="11.2" width="4" height="1.6" fill="#c6c6c6" opacity=".8"/><path d="M9 15.5 L12.5 12 M12.5 12 V14.2 M12.5 12 H10.3" stroke="#c6c6c6" stroke-width="1.1" fill="none"/></svg>
<svg style="left:423px;top:39px;" width="7" height="10" viewBox="0 0 7 10"><path d="M0.5 0.5 L6.5 5 L0.5 9.5 Z" fill="#b9b9b9"/></svg>
<div style="left:444px;top:41px;width:8px;height:8px;background:#b9b9b9"></div>
<div style="left:460px;top:35px;width:1px;height:13px;background:#9b9b9b"></div>
<svg style="left:466px;top:34px;" width="17" height="16" viewBox="0 0 17 16"><g fill="none" stroke="#b9b9b9" stroke-width="1.2"><path d="M5.5 1 H1.5 V12.5 H4.5 M2.5 10.5 L4.8 12.6 L2.5 14.8" /><path d="M8 3.5 H15.5 M8 6 H15.5 M8 8.5 H15.5 M8 11 H15.5" stroke-width="1"/></g></svg>
<svg style="left:490px;top:35px;" width="16" height="14" viewBox="0 0 16 14"><g fill="none" stroke="#b9b9b9" stroke-width="1.2"><path d="M6.5 2 H1.5 V6.5 H5 M3.2 4.5 L5.4 6.6 L3.2 8.8" /><path d="M8 3 H15 M9 6 H15 M9 8.8 H15 M7 11.8 H15" stroke-width="1"/></g></svg>
<svg style="left:513px;top:34px;" width="16" height="16" viewBox="0 0 16 16"><g fill="none" stroke="#b9b9b9" stroke-width="1.2"><path d="M2 8 V4.5 H6.5 M4.5 2 L7 4.5 L4.5 7" /><path d="M7.5 8 H15 M8.5 10.8 H15 M8.5 13.4 H15" stroke-width="1"/></g></svg>
<svg style="left:536px;top:36px;" width="16" height="12" viewBox="0 0 16 12"><g fill="none" stroke="#b9b9b9" stroke-width="1.2"><path d="M0.5 3.5 H5.5 M3.6 1.4 L5.8 3.5 L3.6 5.6" /><path d="M8 1.5 H15.5 M8 4.2 H15.5 M8 6.9 H15.5 M8 9.6 H15.5" stroke-width="1"/></g></svg>
<svg style="left:560px;top:34px;" width="12" height="16" viewBox="0 0 12 16"><g fill="none" stroke="#b9b9b9" stroke-width="1.2"><path d="M2 4.5 Q2.5 1 6 1 Q9.5 1.5 8.5 4.5 Q7.5 6.5 4.5 6.5" /><path d="M8 0.8 L10 2.8 M10 0.8 L8 2.8" stroke-width=".9"/><path d="M1 8.5 H7 V6.8 L11 10.5 L7 14.2 V12.5 H1 Z" /></g></svg>
<div style="left:582px;top:35px;width:1px;height:13px;background:#9b9b9b"></div>
<svg style="left:591px;top:38px;" width="12" height="10" viewBox="0 0 12 10"><g fill="none" stroke="#b9b9b9" stroke-width="1.2"><path d="M0.8 3 H6 V0.8 L10.8 5 L6 9.2 V7 H0.8 Z" /></g></svg>
<div style="left:612px;top:35px;width:1px;height:13px;background:#9b9b9b"></div>
<svg style="left:619px;top:35px;" width="17" height="15" viewBox="0 0 17 15"><rect x="0.7" y="0.7" width="13.5" height="10" fill="#fff" stroke="#333" stroke-width="1.3"/><rect x="11" y="0.7" width="3.5" height="3" fill="#888"/><rect x="5.2" y="3.6" width="7" height="5.4" fill="#2aa8e8" stroke="#1b7fc0" stroke-width=".6"/><path d="M8.8 9 V12.5 M3.5 13.2 H15.5" stroke="#444" stroke-width="1.1"/><circle cx="8.8" cy="13.2" r="1.7" fill="#444"/></svg>
<svg style="left:642px;top:35px;" width="17" height="16" viewBox="0 0 17 16"><rect x="0.7" y="0.7" width="12.5" height="9.5" fill="#fff" stroke="#333" stroke-width="1.3"/><rect x="10.3" y="0.7" width="3" height="6" fill="#999"/><g transform="translate(11.5,11)" fill="#35a815"><path d="M-1 -2.4 L0 -4.6 L1 -2.4 Z" transform="rotate(0)"/><path d="M-1 -2.4 L0 -4.6 L1 -2.4 Z" transform="rotate(36)"/><path d="M-1 -2.4 L0 -4.6 L1 -2.4 Z" transform="rotate(72)"/><path d="M-1 -2.4 L0 -4.6 L1 -2.4 Z" transform="rotate(108)"/><path d="M-1 -2.4 L0 -4.6 L1 -2.4 Z" transform="rotate(144)"/><path d="M-1 -2.4 L0 -4.6 L1 -2.4 Z" transform="rotate(180)"/><path d="M-1 -2.4 L0 -4.6 L1 -2.4 Z" transform="rotate(216)"/><path d="M-1 -2.4 L0 -4.6 L1 -2.4 Z" transform="rotate(252)"/><path d="M-1 -2.4 L0 -4.6 L1 -2.4 Z" transform="rotate(288)"/><path d="M-1 -2.4 L0 -4.6 L1 -2.4 Z" transform="rotate(324)"/><circle r="3.2"/></g><circle cx="11.5" cy="11" r="1.5" fill="#fff"/></svg>
<div style="left:665px;top:33px;width:138px;height:17px;background:#dddddd"></div>
<div style="left:810px;top:34px;width:12px;height:15px;background:#f6f6f6"></div>
<span style="left:666.5px;top:34px;letter-spacing:-0.004px;">Sélectionner tout</span>
<svg style="left:813px;top:41px;" width="6" height="4" viewBox="0 0 6 4"><path d="M0 0 H6 L3 3.4 Z" fill="#000"/></svg>
<div style="left:828px;top:35px;width:1px;height:13px;background:#9b9b9b"></div>
<div style="left:835px;top:33px;width:138px;height:17px;background:#dddddd"></div>
<div style="left:980px;top:34px;width:12px;height:15px;background:#f6f6f6"></div>
<span style="left:836.5px;top:34px;letter-spacing:-0.094px;">Configuration logique</span>
<svg style="left:983px;top:41px;" width="6" height="4" viewBox="0 0 6 4"><path d="M0 0 H6 L3 3.4 Z" fill="#000"/></svg>
<svg style="left:16px;top:61px;" width="17" height="15" viewBox="0 0 17 15"><g fill="none" stroke="#b9b9b9" stroke-width="1.2"><rect x="0.6" y="3" width="3.6" height="11"/><path d="M0.6 14.2 H16 M5.5 4.5 L7.5 2.5 M6.5 1 H16" /><path d="M8.5 4.5 H16 M10 7 H16" stroke-width=".9" stroke-dasharray="1 1"/></g></svg>
<svg style="left:39px;top:61px;" width="17" height="15" viewBox="0 0 17 15"><g fill="none" stroke="#b9b9b9" stroke-width="1.2"><rect x="0.6" y="3" width="3.6" height="11"/><path d="M0.6 14.2 H16 M5.5 4.5 L7.5 2.5 M6.5 1 H16 M12.5 3 V13 M10.3 10.6 L12.5 13 L14.7 10.6 M10 13.6 H15" /><path d="M8 5 H11 M14 5 H16" stroke-width=".9" stroke-dasharray="1 1"/></g></svg>
<svg style="left:62px;top:63px;" width="15" height="10" viewBox="0 0 15 10"><g fill="none" stroke="#b9b9b9" stroke-width="1.2"><path d="M3 0.8 L0.8 5 L3 9.2 M12 0.8 L14.2 5 L12 9.2" stroke-width="1"/><path d="M4 3 L6.4 6 M6.4 3 L4 6 M8.6 3.5 L11 6.5 M11 3.5 L8.6 6.5" stroke-width=".8"/></g></svg>
<div style="left:85px;top:61px;width:1px;height:13px;background:#9b9b9b"></div>
<div style="left:92px;top:68px;width:3px;height:1.6px;background:#b9b9b9"></div>
<span style="left:95.5px;top:62px;font-family:'Liberation Mono',monospace;font-size:7.5px;color:#b0b0b0;font-weight:bold;letter-spacing:-0.4px;">VAR</span>
<svg style="left:115px;top:64px;" width="16" height="9" viewBox="0 0 16 9"><g fill="none" stroke="#b9b9b9" stroke-width="1.2"><path d="M0 4.5 H3 M13 4.5 H16"/><path d="M5.5 0.8 Q2.2 4.5 5.5 8.2 M10.5 0.8 Q13.8 4.5 10.5 8.2" stroke-width="1.6"/></g></svg>
<svg style="left:138px;top:64px;" width="16" height="9" viewBox="0 0 16 9"><g fill="none" stroke="#b9b9b9" stroke-width="1.2"><path d="M0 4.5 H3 M13 4.5 H16"/><path d="M5.5 0.8 Q2.2 4.5 5.5 8.2 M10.5 0.8 Q13.8 4.5 10.5 8.2" stroke-width="1.6"/><path d="M6.8 7.5 L9.2 1.5" stroke-width="1.2"/></g></svg>
<svg style="left:161px;top:64px;" width="16" height="9" viewBox="0 0 16 9"><g fill="none" stroke="#b9b9b9" stroke-width="1.2"><path d="M0 4.5 H3 M13 4.5 H16"/><path d="M5.5 0.8 Q2.2 4.5 5.5 8.2 M10.5 0.8 Q13.8 4.5 10.5 8.2" stroke-width="1.6"/><path d="M9.4 2.6 Q6.8 2 7 3.8 Q7.2 4.6 8.8 5 Q9.6 6.6 6.8 6.4" stroke-width="1"/></g></svg>
<svg style="left:184px;top:64px;" width="16" height="9" viewBox="0 0 16 9"><g fill="none" stroke="#b9b9b9" stroke-width="1.2"><path d="M0 4.5 H3 M13 4.5 H16"/><path d="M5.5 0.8 Q2.2 4.5 5.5 8.2 M10.5 0.8 Q13.8 4.5 10.5 8.2" stroke-width="1.6"/><path d="M7 7 V2 H8.6 Q9.6 3.2 8.6 4.4 H7 M8.6 4.4 L9.6 7" stroke-width="1"/></g></svg>
<svg style="left:208px;top:63px;" width="15" height="11" viewBox="0 0 15 11"><g fill="none" stroke="#b9b9b9" stroke-width="1.2"><path d="M0 5.5 H2.5 M12.5 5.5 H15"/><rect x="2.8" y="1.5" width="2.2" height="8.5"/><rect x="10" y="1.5" width="2.2" height="8.5"/></g></svg>
<svg style="left:231px;top:63px;" width="15" height="11" viewBox="0 0 15 11"><g fill="none" stroke="#b9b9b9" stroke-width="1.2"><path d="M0 5.5 H2.5 M12.5 5.5 H15"/><rect x="2.8" y="1.5" width="2.2" height="8.5"/><rect x="10" y="1.5" width="2.2" height="8.5"/><path d="M6.4 9.5 L8.8 1.5"/></g></svg>
<svg style="left:254px;top:63px;" width="15" height="11" viewBox="0 0 15 11"><g fill="none" stroke="#b9b9b9" stroke-width="1.2"><path d="M0 5.5 H2.5 M12.5 5.5 H15"/><rect x="2.8" y="1.5" width="2.2" height="8.5"/><rect x="10" y="1.5" width="2.2" height="8.5"/><path d="M6.6 8.5 V2.5 H8.2 Q9 3.8 8.2 5 H6.6" stroke-width="1"/></g></svg>
<svg style="left:277px;top:63px;" width="15" height="11" viewBox="0 0 15 11"><g fill="none" stroke="#b9b9b9" stroke-width="1.2"><path d="M0 5.5 H2.5 M12.5 5.5 H15"/><rect x="2.8" y="1.5" width="2.2" height="8.5"/><rect x="10" y="1.5" width="2.2" height="8.5"/><path d="M6.4 8.5 V2.5 L8.8 8.5 V2.5" stroke-width="1"/></g></svg>
<svg style="left:299px;top:59px;" width="16" height="16" viewBox="0 0 16 16"><g fill="none" stroke="#b9b9b9" stroke-width="1.2"><path d="M3 2.5 H14 M11.5 0.5 L14 2.5 L11.5 4.5"/><path d="M0 9.5 H2.5 M12.5 9.5 H15.5"/><rect x="2.8" y="5.5" width="2.2" height="8.5"/><rect x="10" y="5.5" width="2.2" height="8.5"/></g></svg>
<svg style="left:322px;top:61px;" width="16" height="14" viewBox="0 0 16 14"><g fill="none" stroke="#b9b9b9" stroke-width="1.2"><path d="M1 0.5 V6.5 M12.5 6.5 V0.5 H14.5"/><rect x="2" y="4" width="2.2" height="8.5"/><rect x="9.4" y="4" width="2.2" height="8.5"/></g></svg>
<svg style="left:345px;top:61px;" width="16" height="14" viewBox="0 0 16 14"><g fill="none" stroke="#b9b9b9" stroke-width="1.2"><path d="M1 0.5 V6.5 M14 6.5 V0.5 M6.2 11.5 L8.6 4.5"/><rect x="2" y="4" width="2.2" height="8.5"/><rect x="10.4" y="4" width="2.2" height="8.5"/></g></svg>
<svg style="left:368px;top:63px;" width="16" height="13" viewBox="0 0 16 13"><g fill="none" stroke="#b9b9b9" stroke-width="1.2"><path d="M0.8 12.5 V6 M14.8 12.5 V7"/><rect x="2" y="1.5" width="2.2" height="8.5"/><rect x="10.4" y="1.5" width="2.2" height="8.5"/></g></svg>
<div style="left:391px;top:61px;width:1px;height:13px;background:#9b9b9b"></div>
<svg style="left:398px;top:62px;" width="16" height="13" viewBox="0 0 16 13"><g fill="none" stroke="#b9b9b9" stroke-width="1.2"><rect x="3" y="1" width="10" height="11" fill="#dedede"/><path d="M0 4.5 H3 M0 8.5 H3"/><path d="M13 4.5 H16 M13 8.5 H16"/><g stroke-width=".9"><circle cx="8" cy="6.5" r="3"/><path d="M6.5 8 L9.5 5"/></g></g></svg>
<svg style="left:421px;top:62px;" width="16" height="13" viewBox="0 0 16 13"><g fill="none" stroke="#b9b9b9" stroke-width="1.2"><rect x="3" y="1" width="10" height="11" fill="#dedede"/><path d="M0 4.5 H3 M0 8.5 H3"/><path d="M13 4.5 H16 M13 8.5 H16"/><g stroke-width=".9"><circle cx="8" cy="6.5" r="3"/><path d="M8 6.5 L6.5 4.5 M8 6.5 H10"/></g></g></svg>
<svg style="left:444px;top:62px;" width="16" height="13" viewBox="0 0 16 13"><g fill="none" stroke="#b9b9b9" stroke-width="1.2"><rect x="3" y="1" width="10" height="11" fill="#dedede"/><path d="M0 4.5 H3 M0 8.5 H3"/><path d="M13 4.5 H16 M13 8.5 H16"/><g stroke-width=".9"><circle cx="8" cy="6.5" r="3"/><path d="M8 4.5 V6.5 L6.5 8 M8 6.5 L9.5 8"/></g></g></svg>
<svg style="left:467px;top:62px;" width="16" height="13" viewBox="0 0 16 13"><g fill="none" stroke="#b9b9b9" stroke-width="1.2"><rect x="3" y="1" width="10" height="11" fill="#dedede"/><path d="M0 4.5 H3 M0 8.5 H3"/><path d="M13 4.5 H16 M13 8.5 H16"/><g stroke-width=".9"><path d="M4.8 6.5 H8 M6.4 4.9 V8.1 M9.2 5 L10.6 4 V9"/></g></g></svg>
<svg style="left:490px;top:62px;" width="16" height="13" viewBox="0 0 16 13"><g fill="none" stroke="#b9b9b9" stroke-width="1.2"><rect x="3" y="1" width="10" height="11" fill="#dedede"/><path d="M0 4.5 H3 M0 8.5 H3"/><path d="M13 4.5 H16 M13 8.5 H16"/><g stroke-width=".9"><path d="M4.8 6.5 H8 M9.2 5 L10.6 4 V9"/></g></g></svg>
<svg style="left:513px;top:62px;" width="16" height="13" viewBox="0 0 16 13"><g fill="none" stroke="#b9b9b9" stroke-width="1.2"><rect x="3" y="1" width="10" height="11" fill="#dedede"/><path d="M0 4.5 H3 M0 8.5 H3"/><path d="M13 4.5 H16 M13 8.5 H16"/><g stroke-width=".9"><path d="M4.8 5.5 H8 M6.4 3.9 V7.1 M4.8 8.6 H8 M9.2 5 L10.6 4 V9"/></g></g></svg>
<div style="left:536px;top:61px;width:1px;height:13px;background:#9b9b9b"></div>
<svg style="left:543px;top:62px;" width="16" height="13" viewBox="0 0 16 13"><g fill="none" stroke="#b9b9b9" stroke-width="1.2"><rect x="3" y="1" width="10" height="11" fill="#dedede"/><path d="M0 4.5 H3 M0 8.5 H3"/><path d="M13 4.5 H16"/><g stroke-width=".9"><path d="M5 6.5 H11 M8 3.5 V9.5"/></g></g></svg>
<svg style="left:566px;top:62px;" width="16" height="13" viewBox="0 0 16 13"><g fill="none" stroke="#b9b9b9" stroke-width="1.2"><rect x="3" y="1" width="10" height="11" fill="#dedede"/><path d="M0 4.5 H3 M0 8.5 H3"/><path d="M13 4.5 H16"/><g stroke-width=".9"><path d="M5.2 6.5 H10.8"/></g></g></svg>
<svg style="left:589px;top:62px;" width="16" height="13" viewBox="0 0 16 13"><g fill="none" stroke="#b9b9b9" stroke-width="1.2"><rect x="3" y="1" width="10" height="11" fill="#dedede"/><path d="M0 4.5 H3 M0 8.5 H3"/><path d="M13 4.5 H16"/><g stroke-width=".9"><path d="M5.8 4.3 L10.2 8.7 M10.2 4.3 L5.8 8.7"/></g></g></svg>
<svg style="left:612px;top:62px;" width="16" height="13" viewBox="0 0 16 13"><g fill="none" stroke="#b9b9b9" stroke-width="1.2"><rect x="3" y="1" width="10" height="11" fill="#dedede"/><path d="M0 4.5 H3 M0 8.5 H3"/><path d="M13 4.5 H16"/><g stroke-width=".9"><path d="M6.6 9.2 L9.4 3.8"/></g></g></svg>
<div style="left:635px;top:61px;width:1px;height:13px;background:#9b9b9b"></div>
<svg style="left:642px;top:62px;" width="16" height="13" viewBox="0 0 16 13"><g fill="none" stroke="#b9b9b9" stroke-width="1.2"><rect x="3" y="1" width="10" height="11" fill="#dedede"/><path d="M0 4.5 H3 M0 8.5 H3"/><path d="M13 4.5 H16"/><g stroke-width=".9"><path d="M10 3.8 L6 6.5 L10 9.2"/></g></g></svg>
<svg style="left:665px;top:62px;" width="16" height="13" viewBox="0 0 16 13"><g fill="none" stroke="#b9b9b9" stroke-width="1.2"><rect x="3" y="1" width="10" height="11" fill="#dedede"/><path d="M0 4.5 H3 M0 8.5 H3"/><path d="M13 4.5 H16"/><g stroke-width=".9"><path d="M10 3 L6 5.4 L10 7.8 M6 9.8 H10"/></g></g></svg>
<svg style="left:688px;top:62px;" width="16" height="13" viewBox="0 0 16 13"><g fill="none" stroke="#b9b9b9" stroke-width="1.2"><rect x="3" y="1" width="10" height="11" fill="#dedede"/><path d="M0 4.5 H3 M0 8.5 H3"/><path d="M13 4.5 H16"/><g stroke-width=".9"><path d="M5.5 5.2 H10.5 M5.5 7.8 H10.5"/></g></g></svg>
<svg style="left:711px;top:62px;" width="16" height="13" viewBox="0 0 16 13"><g fill="none" stroke="#b9b9b9" stroke-width="1.2"><rect x="3" y="1" width="10" height="11" fill="#dedede"/><path d="M0 4.5 H3 M0 8.5 H3"/><path d="M13 4.5 H16"/><g stroke-width=".9"><path d="M6 3 L10 5.4 L6 7.8 M6 9.8 H10"/></g></g></svg>
<svg style="left:734px;top:62px;" width="16" height="13" viewBox="0 0 16 13"><g fill="none" stroke="#b9b9b9" stroke-width="1.2"><rect x="3" y="1" width="10" height="11" fill="#dedede"/><path d="M0 4.5 H3 M0 8.5 H3"/><path d="M13 4.5 H16"/><g stroke-width=".9"><path d="M6 3.8 L10 6.5 L6 9.2"/></g></g></svg>
<svg style="left:757px;top:62px;" width="16" height="13" viewBox="0 0 16 13"><g fill="none" stroke="#b9b9b9" stroke-width="1.2"><rect x="3" y="1" width="10" height="11" fill="#dedede"/><path d="M0 4.5 H3 M0 8.5 H3"/><path d="M13 4.5 H16"/><g stroke-width=".9"><path d="M7.2 4.6 L5.2 6.5 L7.2 8.4 M8.8 4.6 L10.8 6.5 L8.8 8.4"/></g></g></svg>
<div style="left:780px;top:61px;width:1px;height:13px;background:#9b9b9b"></div>
<svg style="left:787px;top:62px;" width="16" height="13" viewBox="0 0 16 13"><g fill="none" stroke="#b9b9b9" stroke-width="1.2"><rect x="3" y="1" width="10" height="11" fill="#d4d4d4"/><path d="M0 3.5 H3 M0 6.5 H3 M0 9.5 H3 M13 3.5 H16 M13 6.5 H16"/><g stroke="#eee" stroke-width=".9"></g></g></svg>
<svg style="left:810px;top:62px;" width="16" height="13" viewBox="0 0 16 13"><g fill="none" stroke="#b9b9b9" stroke-width="1.2"><rect x="3" y="1" width="10" height="11" fill="#d4d4d4"/><path d="M0 3.5 H3 M0 6.5 H3 M0 9.5 H3 M13 3.5 H16 M13 6.5 H16"/><g stroke="#eee" stroke-width=".9"><path d="M6.8 4.5 Q8 3 9.2 4.5 Q9 6 8 6.8 V7.8 M8 9 V10"/></g></g></svg>
<svg style="left:833px;top:62px;" width="16" height="13" viewBox="0 0 16 13"><g fill="none" stroke="#b9b9b9" stroke-width="1.2"><rect x="3" y="1" width="10" height="11" fill="#d4d4d4"/><path d="M0 3.5 H3 M0 6.5 H3 M0 9.5 H3 M13 3.5 H16 M13 6.5 H16"/><g stroke="#eee" stroke-width=".9"><path d="M7.4 4 H5.4 V9 H7.4 M5.4 6.5 H7 M8.6 9 V4 L10.6 9 V4"/></g></g></svg>
<svg style="left:856px;top:62px;" width="16" height="13" viewBox="0 0 16 13"><g fill="none" stroke="#b9b9b9" stroke-width="1.2"><rect x="3" y="1" width="10" height="11" fill="#d4d4d4"/><path d="M0 3.5 H3 M0 6.5 H3 M0 9.5 H3 M13 3.5 H16 M13 6.5 H16"/><g stroke="#eee" stroke-width=".9"><path d="M7.4 4 H5.4 V9 H7.4 M5.4 6.5 H7 M8.6 9 V4 L10.6 9 V4"/></g></g></svg>
<div style="left:879px;top:61px;width:1px;height:13px;background:#9b9b9b"></div>
<svg style="left:886px;top:63px;" width="13" height="11" viewBox="0 0 13 11"><g fill="none" stroke="#b9b9b9" stroke-width="1.2"><path d="M0 5.5 H7 M7 1 L12 5.5 L7 10 Z"/></g></svg>
<svg style="left:910px;top:63px;" width="14" height="9" viewBox="0 0 14 9"><g fill="none" stroke="#b9b9b9" stroke-width="1.2"><path d="M0.6 0.6 H9.5 L13 4 L9.5 7.6 H0.6 Z"/><path d="M3 2.5 V5.8 H4.8 M6.2 2.5 V5.8 M8 2.5 V5.8 H9 Q10 4.2 9 2.5 Z" stroke-width=".8"/></g></svg>
<svg style="left:932px;top:63px;" width="7" height="11" viewBox="0 0 7 11"><path d="M6.5 1 L1 5.5 L6.5 10 Z" fill="none" stroke="#b9b9b9" stroke-width="1.2"/></svg>
<span style="left:938.5px;top:63px;font-family:'Liberation Mono',monospace;font-size:7.5px;color:#b0b0b0;font-weight:bold;letter-spacing:-0.6px;">RET</span>
<svg style="left:956px;top:60px;" width="15" height="16" viewBox="0 0 15 16"><g fill="none" stroke="#b9b9b9" stroke-width="1.2"><path d="M13.5 3 V15.5 M5 9.5 H13.5"/><path d="M1 1 L6 6 M6 1 L1 6 M3.5 0 V7 M0 3.5 H7" stroke-width=".7"/><path d="M7.5 6 L10 8.5" stroke-width=".9"/></g></svg>
<div style="left:978px;top:61px;width:1px;height:13px;background:#9b9b9b"></div>
<svg style="left:987px;top:62px;" width="12" height="13" viewBox="0 0 12 13"><g fill="none" stroke="#b9b9b9" stroke-width="1.2"><rect x="0.8" y="0.8" width="10" height="11" fill="#dedede"/><path d="M4.5 9.5 L7.5 3.5" stroke-width="1"/></g></svg>
<svg style="left:1010px;top:62px;" width="12" height="13" viewBox="0 0 12 13"><g fill="none" stroke="#b9b9b9" stroke-width="1.2"><rect x="0.8" y="0.8" width="10" height="11" fill="#dedede"/><path d="M3.2 8 V3.2 H4.8 Q5.6 4.4 4.8 5.4 H3.2 M6.6 9.6 V5.4 L8.8 9.6 V5.4" stroke="#f2f2f2" stroke-width=".9"/></g></svg>
<svg style="left:1032px;top:62px;" width="14" height="14" viewBox="0 0 14 14"><g fill="none" stroke="#b9b9b9" stroke-width="1.2"><path d="M0 6 H3.5 M12.8 0 V13.5"/><rect x="3.5" y="1.5" width="8" height="9.5" fill="#dedede"/><path d="M9.4 3.8 Q6.4 3 6.4 5 Q6.6 6.2 8.4 6.4 Q10 7.2 9 8.6 Q7.6 9.4 6 8.6" stroke-width="1.1"/></g></svg>
<div style="left:1054px;top:61px;width:1px;height:13px;background:#9b9b9b"></div>
<svg style="left:1061px;top:62px;" width="17" height="13" viewBox="0 0 17 13"><g fill="none" stroke="#b9b9b9" stroke-width="1.2"><rect x="0.8" y="0.8" width="4.4" height="11.4" fill="#d8d8d8"/><path d="M5.2 8.5 H10 V3.5 H16.5"/></g></svg>
<svg style="left:1084px;top:62px;" width="17" height="13" viewBox="0 0 17 13"><g fill="none" stroke="#b9b9b9" stroke-width="1.2"><path d="M0 3 H16 M8 3 V12 H16"/><circle cx="8" cy="3" r="1.5" fill="#b9b9b9"/></g></svg>
<svg style="left:1107px;top:59px;" width="17" height="17" viewBox="0 0 17 17"><g fill="none" stroke="#b9b9b9" stroke-width="1.2"><path d="M0 6.5 H16 M12.5 1 V12 M10.3 9.6 L12.5 12 L14.7 9.6 M9 14 H16"/><circle cx="7" cy="6.5" r="1.5" fill="#b9b9b9"/><path d="M4 9.5 L9 14.5 M9 9.5 L4 14.5 M6.5 8.5 V15.5 M3 12 H10" stroke-width=".7"/></g></svg>
<svg style="left:1130px;top:58px;" width="17" height="18" viewBox="0 0 17 18"><g fill="none" stroke="#b9b9b9" stroke-width="1.2"><path d="M0 11.5 H16 M12.5 17 V7.5 M10.3 9.8 L12.5 7.4 L14.7 9.8 M8 17.3 H16"/><circle cx="7" cy="11.5" r="1.5" fill="#b9b9b9"/><path d="M4 1 L9 6 M9 1 L4 6 M6.5 0 V7 M3 3.5 H10" stroke-width=".7"/><path d="M11 3.5 H16" stroke-width=".8" stroke-dasharray="1 1"/></g></svg>
</body></html>
